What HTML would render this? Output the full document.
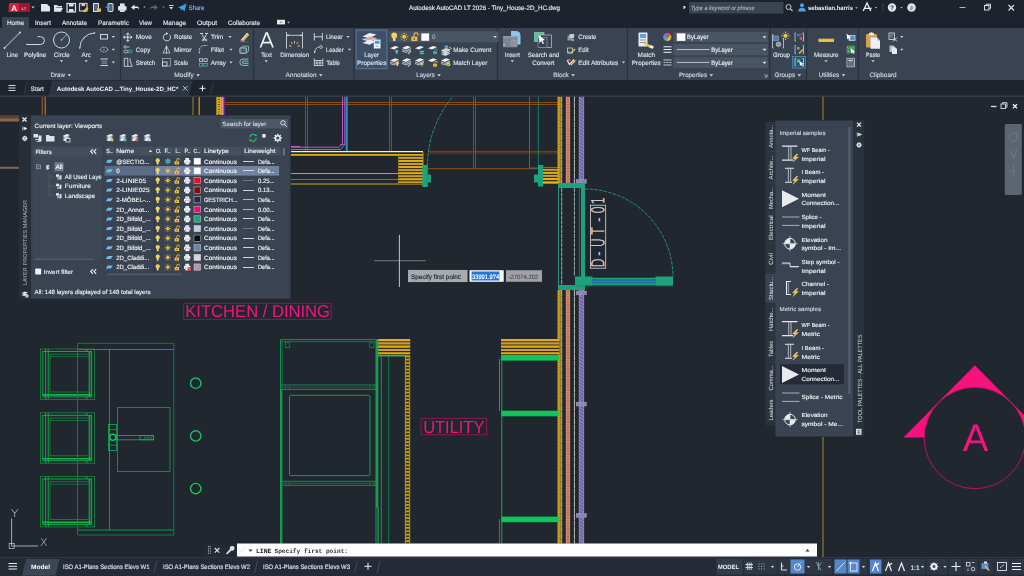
<!DOCTYPE html>
<html lang="en"><head><meta charset="utf-8"><title>Autodesk AutoCAD LT 2026 - Tiny_House-2D_HC.dwg</title>
<style>
html,body{margin:0;padding:0;background:#212830;overflow:hidden}
body{width:1024px;height:576px;position:relative;font-family:"Liberation Sans",sans-serif}
svg{position:absolute;left:0;top:0;display:block;opacity:0.999;text-rendering:geometricPrecision}
svg text{font-family:"Liberation Sans",sans-serif;white-space:pre}
</style></head><body>
<svg width="1024" height="576" viewBox="0 0 1024 576">
<g id="canvas">
<rect x="0" y="96" width="1024" height="461" fill="#212830" />
<line x1="225" y1="102.5" x2="557.8" y2="102.5" stroke="#8f5216" stroke-width="0.9" />
<line x1="225" y1="104.5" x2="557.8" y2="104.5" stroke="#8f5216" stroke-width="0.9" />
<line x1="305.5" y1="96.5" x2="305.5" y2="151" stroke="#8f5216" stroke-width="0.9" />
<line x1="307.5" y1="96.5" x2="307.5" y2="151" stroke="#8f5216" stroke-width="0.9" />
<line x1="389.5" y1="96.5" x2="389.5" y2="151" stroke="#8f5216" stroke-width="0.9" />
<line x1="391.5" y1="96.5" x2="391.5" y2="151" stroke="#8f5216" stroke-width="0.9" />
<line x1="473.5" y1="96.5" x2="473.5" y2="169" stroke="#8f5216" stroke-width="0.9" />
<line x1="475.5" y1="96.5" x2="475.5" y2="169" stroke="#8f5216" stroke-width="0.9" />
<line x1="428" y1="151.45" x2="558" y2="151.45" stroke="#80491a" stroke-width="0.9" />
<line x1="428" y1="152.95" x2="558" y2="152.95" stroke="#80491a" stroke-width="0.9" />
<line x1="428" y1="168.6" x2="538" y2="168.6" stroke="#7a4a1e" stroke-width="1.2" />
<line x1="42.3" y1="96.5" x2="42.3" y2="115" stroke="#8a5a34" stroke-width="1.2" />
<line x1="45.2" y1="96.5" x2="45.2" y2="115" stroke="#c27a1e" stroke-width="1.2" />
<line x1="193" y1="96.5" x2="193" y2="115" stroke="#9a8a28" stroke-width="1" />
<line x1="199.2" y1="96.5" x2="199.2" y2="115" stroke="#d89a18" stroke-width="1.2" />
<rect x="216.8" y="96.5" width="4.2" height="18.5" fill="#e2b010" />
<line x1="219" y1="96.5" x2="219" y2="115" stroke="#6a5208" stroke-width="2.4" stroke-dasharray="1 1.500"/>
<line x1="216.8" y1="96.5" x2="216.8" y2="115" stroke="#e2b010" stroke-width="0.8" />
<line x1="221" y1="96.5" x2="221" y2="115" stroke="#e2b010" stroke-width="0.8" />
<rect x="221.3" y="96.5" width="2.3" height="18.5" fill="#e88cc0" />
<line x1="224.6" y1="96.5" x2="224.6" y2="115" stroke="#5a2a80" stroke-width="1.2" />
<rect x="0" y="115.3" width="19" height="3" fill="#5c4234" />
<rect x="0" y="118.3" width="19" height="3.3" fill="#86664f" />
<line x1="0" y1="167.8" x2="19" y2="167.8" stroke="#8a6450" stroke-width="2" />
<path d="M342.500 96.500V143.500l-3 3.700H291" stroke="#c565d8" fill="none" stroke-width="0.9" />
<path d="M344.800 96.500V144.500l-4 5H291" stroke="#c565d8" fill="none" stroke-width="0.9" />
<path d="M340 144.500h4.800" stroke="#c565d8" fill="none" stroke-width="0.7" />
<line x1="346.7" y1="96" x2="346.7" y2="151" stroke="#2c90c8" stroke-width="2" />
<line x1="291" y1="151.7" x2="423" y2="151.7" stroke="#f2f0ea" stroke-width="1.3" />
<line x1="291" y1="154.9" x2="423" y2="154.9" stroke="#e2b010" stroke-width="1.8" />
<line x1="291" y1="173.5" x2="398.5" y2="173.5" stroke="#e2b010" stroke-width="0.9" />
<line x1="291" y1="179.5" x2="398.5" y2="179.5" stroke="#9a7a1c" stroke-width="0.9" />
<line x1="291" y1="184" x2="423" y2="184" stroke="#9a7a1c" stroke-width="1.3" />
<line x1="291" y1="146.5" x2="300" y2="146.5" stroke="#c565d8" stroke-width="0.9" />
<line x1="398.5" y1="156" x2="398.5" y2="184" stroke="#e2b010" stroke-width="0.8" />
<rect x="398.5" y="156" width="24.5" height="28" fill="#3a2e0c" />
<line x1="398.5" y1="157.9" x2="423" y2="157.9" stroke="#bf9e4e" stroke-width="2" />
<line x1="398.5" y1="160.95000000000002" x2="423" y2="160.95000000000002" stroke="#e2b010" stroke-width="2" />
<line x1="398.5" y1="164.0" x2="423" y2="164.0" stroke="#bf9e4e" stroke-width="2" />
<line x1="398.5" y1="167.05" x2="423" y2="167.05" stroke="#e2b010" stroke-width="2" />
<line x1="398.5" y1="170.1" x2="423" y2="170.1" stroke="#bf9e4e" stroke-width="2" />
<line x1="398.5" y1="173.15" x2="423" y2="173.15" stroke="#e2b010" stroke-width="2" />
<line x1="398.5" y1="176.2" x2="423" y2="176.2" stroke="#bf9e4e" stroke-width="2" />
<line x1="398.5" y1="179.25" x2="423" y2="179.25" stroke="#e2b010" stroke-width="2" />
<line x1="398.5" y1="182.3" x2="423" y2="182.3" stroke="#bf9e4e" stroke-width="2" />
<line x1="423" y1="152" x2="423" y2="185" stroke="#e2b010" stroke-width="0.8" />
<rect x="422.3" y="165" width="5.5" height="22" fill="#1fa37c" />
<rect x="427.5" y="174.5" width="3.5" height="8" fill="#1fa37c" />
<path d="M427.500 166A106.500 106.500 0 0 1 453.500 96" stroke="#1fa37c" fill="none" stroke-width="0.9" stroke-dasharray="3.500 1.200"/>
<line x1="529.5" y1="96" x2="529.5" y2="168" stroke="#1b8a72" stroke-width="0.9" />
<line x1="538.3" y1="96" x2="538.3" y2="166" stroke="#1b8a72" stroke-width="0.9" />
<line x1="529.5" y1="168" x2="538" y2="168" stroke="#1b8a72" stroke-width="0.9" />
<rect x="538" y="165" width="5.3" height="21.5" fill="#1fa37c" />
<rect x="534" y="174.5" width="4.5" height="8" fill="#1fa37c" />
<rect x="543" y="166.5" width="15" height="18" fill="#3a2e0c" />
<line x1="543" y1="167.6" x2="558.5" y2="167.6" stroke="#8a6a20" stroke-width="1.2" />
<line x1="543" y1="169.9" x2="558.5" y2="169.9" stroke="#bf9e4e" stroke-width="1.8" />
<line x1="543" y1="172.9" x2="558.5" y2="172.9" stroke="#e2b010" stroke-width="2" />
<line x1="543" y1="175.9" x2="558.5" y2="175.9" stroke="#bf9e4e" stroke-width="2" />
<line x1="543" y1="179" x2="558.5" y2="179" stroke="#e2b010" stroke-width="2" />
<line x1="543" y1="182.5" x2="558.5" y2="182.5" stroke="#e2b010" stroke-width="2.4" />
<rect x="557.8" y="96" width="2.6" height="87" fill="#caa21c" />
<line x1="559.1" y1="96" x2="559.1" y2="183" stroke="#6e5810" stroke-width="1.1" stroke-dasharray="1 1.400"/>
<line x1="558" y1="96" x2="558" y2="183" stroke="#e6b81c" stroke-width="0.6" />
<line x1="560.2" y1="96" x2="560.2" y2="183" stroke="#e6b81c" stroke-width="0.6" />
<line x1="561.7" y1="96" x2="561.7" y2="183" stroke="#ccd6d0" stroke-width="0.9" stroke-dasharray="6 0.400"/>
<rect x="565.8" y="96" width="4.3" height="87" fill="#d48c6c" />
<line x1="567.95" y1="96" x2="567.95" y2="183" stroke="#a86448" stroke-width="2.4" stroke-dasharray="0.700 1.300"/>
<line x1="574.4" y1="96" x2="574.4" y2="183" stroke="#ccd6d0" stroke-width="0.9" stroke-dasharray="6 0.400"/>
<rect x="579" y="96" width="4.9" height="87" fill="#8c7ebc" />
<path d="M579.300 96.0l4.300 3.200M579.300 99.3l4.300 3.200M579.300 102.6l4.300 3.200M579.300 105.9l4.300 3.200M579.300 109.2l4.300 3.200M579.300 112.5l4.300 3.200M579.300 115.8l4.300 3.200M579.300 119.1l4.300 3.200M579.300 122.4l4.300 3.200M579.300 125.7l4.300 3.200M579.300 129.0l4.300 3.200M579.300 132.3l4.300 3.200M579.300 135.6l4.300 3.200M579.300 138.9l4.300 3.200M579.300 142.2l4.300 3.200M579.300 145.5l4.300 3.200M579.300 148.8l4.300 3.200M579.300 152.1l4.300 3.200M579.300 155.4l4.300 3.200M579.300 158.7l4.300 3.200M579.300 162.0l4.300 3.200M579.300 165.3l4.300 3.200M579.300 168.6l4.300 3.200M579.300 171.9l4.300 3.200M579.300 175.2l4.300 3.200M579.300 178.5l4.300 3.200" stroke="#5c5092" fill="none" stroke-width="1" />
<line x1="579.2" y1="96" x2="579.2" y2="183" stroke="#9e90cc" stroke-width="0.6" />
<line x1="583.7" y1="96" x2="583.7" y2="183" stroke="#9e90cc" stroke-width="0.6" />
<rect x="557.8" y="290" width="2.6" height="253.5" fill="#caa21c" />
<line x1="559.1" y1="290" x2="559.1" y2="543.5" stroke="#6e5810" stroke-width="1.1" stroke-dasharray="1 1.400"/>
<line x1="558" y1="290" x2="558" y2="543.5" stroke="#e6b81c" stroke-width="0.6" />
<line x1="560.2" y1="290" x2="560.2" y2="543.5" stroke="#e6b81c" stroke-width="0.6" />
<line x1="561.7" y1="290" x2="561.7" y2="543.5" stroke="#ccd6d0" stroke-width="0.9" stroke-dasharray="6 0.400"/>
<rect x="565.8" y="290" width="4.3" height="253.5" fill="#d48c6c" />
<line x1="567.95" y1="290" x2="567.95" y2="543.5" stroke="#a86448" stroke-width="2.4" stroke-dasharray="0.700 1.300"/>
<line x1="574.4" y1="290" x2="574.4" y2="543.5" stroke="#ccd6d0" stroke-width="0.9" stroke-dasharray="6 0.400"/>
<rect x="579" y="290" width="4.9" height="253.5" fill="#8c7ebc" />
<path d="M579.300 290.0l4.300 3.200M579.300 293.3l4.300 3.200M579.300 296.6l4.300 3.200M579.300 299.9l4.300 3.200M579.300 303.2l4.300 3.200M579.300 306.5l4.300 3.200M579.300 309.8l4.300 3.200M579.300 313.1l4.300 3.200M579.300 316.4l4.300 3.200M579.300 319.7l4.300 3.200M579.300 323.0l4.300 3.200M579.300 326.3l4.300 3.200M579.300 329.6l4.300 3.200M579.300 332.9l4.300 3.200M579.300 336.2l4.300 3.200M579.300 339.5l4.300 3.200M579.300 342.8l4.300 3.200M579.300 346.1l4.300 3.200M579.300 349.4l4.300 3.200M579.300 352.7l4.300 3.200M579.300 356.0l4.300 3.200M579.300 359.3l4.300 3.200M579.300 362.6l4.300 3.200M579.300 365.9l4.300 3.200M579.300 369.2l4.300 3.200M579.300 372.5l4.300 3.200M579.300 375.8l4.300 3.200M579.300 379.1l4.300 3.200M579.300 382.4l4.300 3.200M579.300 385.7l4.300 3.200M579.300 389.0l4.300 3.200M579.300 392.3l4.300 3.200M579.300 395.6l4.300 3.200M579.300 398.9l4.300 3.200M579.300 402.2l4.300 3.200M579.300 405.5l4.300 3.200M579.300 408.8l4.300 3.200M579.300 412.1l4.300 3.200M579.300 415.4l4.300 3.200M579.300 418.7l4.300 3.200M579.300 422.0l4.300 3.200M579.300 425.3l4.300 3.200M579.300 428.6l4.300 3.200M579.300 431.9l4.300 3.200M579.300 435.2l4.300 3.200M579.300 438.5l4.300 3.200M579.300 441.8l4.300 3.200M579.300 445.1l4.300 3.200M579.300 448.4l4.300 3.200M579.300 451.7l4.300 3.200M579.300 455.0l4.300 3.200M579.300 458.3l4.300 3.200M579.300 461.6l4.300 3.200M579.300 464.9l4.300 3.200M579.300 468.2l4.300 3.200M579.300 471.5l4.300 3.200M579.300 474.8l4.300 3.200M579.300 478.1l4.300 3.200M579.300 481.4l4.300 3.200M579.300 484.7l4.300 3.200M579.300 488.0l4.300 3.200M579.300 491.3l4.300 3.200M579.300 494.6l4.300 3.200M579.300 497.9l4.300 3.200M579.300 501.2l4.300 3.200M579.300 504.5l4.300 3.200M579.300 507.8l4.300 3.200M579.300 511.1l4.300 3.200M579.300 514.4l4.300 3.200M579.300 517.7l4.300 3.200M579.300 521.0l4.300 3.200M579.300 524.3l4.300 3.200M579.300 527.6l4.300 3.200M579.300 530.9l4.300 3.200M579.300 534.2l4.300 3.200M579.300 537.5l4.300 3.200M579.300 540.8l4.300 3.200" stroke="#5c5092" fill="none" stroke-width="1" />
<line x1="579.2" y1="290" x2="579.2" y2="543.5" stroke="#9e90cc" stroke-width="0.6" />
<line x1="583.7" y1="290" x2="583.7" y2="543.5" stroke="#9e90cc" stroke-width="0.6" />
<rect x="576.200" y="179.6" width="4.600" height="3.800" fill="#8a84b4" stroke="#a8a0cc" stroke-width="0.500"/><rect x="581.800" y="179.6" width="4.600" height="3.800" fill="#8a84b4" stroke="#a8a0cc" stroke-width="0.500"/>
<rect x="576.200" y="291" width="4.600" height="3.800" fill="#8a84b4" stroke="#a8a0cc" stroke-width="0.500"/><rect x="581.800" y="291" width="4.600" height="3.800" fill="#8a84b4" stroke="#a8a0cc" stroke-width="0.500"/>
<rect x="576.200" y="402.2" width="4.600" height="3.800" fill="#8a84b4" stroke="#a8a0cc" stroke-width="0.500"/><rect x="581.800" y="402.2" width="4.600" height="3.800" fill="#8a84b4" stroke="#a8a0cc" stroke-width="0.500"/>
<rect x="576.200" y="513.5" width="4.600" height="3.800" fill="#8a84b4" stroke="#a8a0cc" stroke-width="0.500"/><rect x="581.800" y="513.5" width="4.600" height="3.800" fill="#8a84b4" stroke="#a8a0cc" stroke-width="0.500"/>
<rect x="558" y="183" width="27" height="5" fill="#1fa37c" />
<rect x="581" y="188" width="4" height="90" fill="#1fa37c" />
<line x1="558.5" y1="188" x2="558.5" y2="285" stroke="#34c49c" stroke-width="0.7" />
<line x1="561.7" y1="188" x2="561.7" y2="285" stroke="#c2cec8" stroke-width="0.8" stroke-dasharray="4 0.600"/>
<line x1="574.4" y1="188" x2="574.4" y2="276" stroke="#c2cec8" stroke-width="0.8" stroke-dasharray="4 0.600"/>
<line x1="579.3" y1="188" x2="579.3" y2="276" stroke="#1b8a72" stroke-width="0.8" />
<rect x="558" y="285" width="27" height="5" fill="#1fa37c" />
<rect x="575" y="276.5" width="17.5" height="9" fill="#1fa37c" />
<rect x="655.5" y="276.5" width="17.5" height="9" fill="#1fa37c" />
<rect x="592" y="277.8" width="64" height="7.2" fill="#1fa37c" />
<rect x="592" y="279.2" width="64" height="4.2" fill="#1c6fa0" />
<line x1="592" y1="281.3" x2="656" y2="281.3" stroke="#3a9ad0" stroke-width="0.7" />
<line x1="575" y1="285.8" x2="673" y2="285.8" stroke="#1b8a72" stroke-width="0.7" />
<path d="M585 189A88 88 0 0 1 673 277" stroke="#1fa37c" fill="none" stroke-width="0.9" stroke-dasharray="3.500 1.200"/>
<rect x="590.400" y="205.200" width="15.300" height="63" fill="none" stroke="#d8dadc" stroke-width="0.800"/>
<text transform="translate(604,267.600) rotate(-90) scale(0.68,1)" x="0 17.500 30.300 48.700 67.400 79.700 93" y="0" font-size="17.200" fill="#d0d3d6" stroke="#d0d3d6" stroke-width="0.550" style="font-family:&quot;DejaVu Sans Light&quot;,&quot;DejaVu Sans&quot;,sans-serif;font-weight:200">D-UT-01</text>
<rect x="378" y="339" width="32.2" height="15.5" fill="#3a2e0c" />
<line x1="378" y1="340.1" x2="410.2" y2="340.1" stroke="#e2b010" stroke-width="2.1" />
<line x1="378" y1="343.38" x2="410.2" y2="343.38" stroke="#bf9e4e" stroke-width="2.1" />
<line x1="378" y1="346.66" x2="410.2" y2="346.66" stroke="#e2b010" stroke-width="2.1" />
<line x1="378" y1="349.94" x2="410.2" y2="349.94" stroke="#bf9e4e" stroke-width="2.1" />
<line x1="378" y1="353.22" x2="410.2" y2="353.22" stroke="#e2b010" stroke-width="2.1" />
<line x1="378" y1="355.6" x2="410.2" y2="355.6" stroke="#c8c040" stroke-width="0.8" />
<rect x="405" y="355.5" width="5" height="188" fill="#3a3010" />
<line x1="405.4" y1="355.5" x2="405.4" y2="543.5" stroke="#d0a818" stroke-width="0.9" />
<line x1="409.7" y1="355.5" x2="409.7" y2="543.5" stroke="#d0a818" stroke-width="0.9" />
<line x1="407.5" y1="355.5" x2="407.5" y2="543.5" stroke="#c4a020" stroke-width="3.6" stroke-dasharray="1.700 1.600"/>
<rect x="501" y="339" width="58.5" height="15.5" fill="#3a2e0c" />
<line x1="501" y1="340.1" x2="559.5" y2="340.1" stroke="#e2b010" stroke-width="2.1" />
<line x1="501" y1="343.38" x2="559.5" y2="343.38" stroke="#bf9e4e" stroke-width="2.1" />
<line x1="501" y1="346.66" x2="559.5" y2="346.66" stroke="#e2b010" stroke-width="2.1" />
<line x1="501" y1="349.94" x2="559.5" y2="349.94" stroke="#bf9e4e" stroke-width="2.1" />
<line x1="501" y1="353.22" x2="559.5" y2="353.22" stroke="#e2b010" stroke-width="2.1" />
<rect x="501" y="355" width="57.8" height="5.6" fill="#10c65a" />
<rect x="501" y="410.7" width="57.8" height="5.6" fill="#10c65a" />
<rect x="501" y="516.6" width="57.8" height="5.6" fill="#10c65a" />
<line x1="499.5" y1="359" x2="499.5" y2="411" stroke="#16b052" stroke-width="0.9" />
<line x1="501.8" y1="360" x2="501.8" y2="543.5" stroke="#16a850" stroke-width="1" />
<line x1="499.5" y1="519" x2="499.5" y2="543.5" stroke="#14a04c" stroke-width="0.9" />
<rect x="280.600" y="339.700" width="96.400" height="210" fill="none" stroke="#18a45c" stroke-width="0.9"/>
<line x1="280.6" y1="341.7" x2="376" y2="341.7" stroke="#128a4c" stroke-width="0.8" />
<line x1="282.3" y1="341.7" x2="282.3" y2="543.5" stroke="#128a4c" stroke-width="0.6" />
<line x1="281" y1="390" x2="281" y2="543.5" stroke="#18a45c" stroke-width="1.6" />
<line x1="377.2" y1="339.7" x2="377.2" y2="507.5" stroke="#18a45c" stroke-width="2.2" />
<line x1="378.3" y1="507" x2="378.3" y2="543.5" stroke="#18a45c" stroke-width="0.9" />
<line x1="375.6" y1="341.7" x2="375.6" y2="543.5" stroke="#128a4c" stroke-width="0.7" />
<line x1="381.3" y1="356.2" x2="381.3" y2="543.5" stroke="#18a45c" stroke-width="0.9" />
<line x1="388.7" y1="356.2" x2="388.7" y2="543.5" stroke="#128a4c" stroke-width="0.9" />
<line x1="378" y1="356.2" x2="405" y2="356.2" stroke="#18a45c" stroke-width="0.8" />
<rect x="285.300" y="342.700" width="4.400" height="4.800" fill="none" stroke="#128a4c" stroke-width="0.800"/><rect x="369.600" y="342.700" width="4.400" height="4.800" fill="none" stroke="#128a4c" stroke-width="0.800"/>
<line x1="280.6" y1="385" x2="377" y2="385" stroke="#18a45c" stroke-width="0.8" />
<line x1="280.6" y1="387.3" x2="377" y2="387.3" stroke="#128a4c" stroke-width="0.6" />
<line x1="280.6" y1="389.4" x2="377" y2="389.4" stroke="#18a45c" stroke-width="0.8" />
<line x1="285.6" y1="385" x2="285.6" y2="389.4" stroke="#128a4c" stroke-width="0.6" />
<line x1="289.5" y1="385" x2="289.5" y2="389.4" stroke="#128a4c" stroke-width="0.6" />
<line x1="370" y1="385" x2="370" y2="389.4" stroke="#128a4c" stroke-width="0.6" />
<line x1="374" y1="385" x2="374" y2="389.4" stroke="#128a4c" stroke-width="0.6" />
<rect x="289.500" y="395.300" width="80.500" height="80.300" rx="1.200" fill="none" stroke="#18a45c" stroke-width="0.9"/>
<line x1="280.6" y1="481.3" x2="377" y2="481.3" stroke="#18a45c" stroke-width="0.8" />
<line x1="280.6" y1="483.3" x2="377" y2="483.3" stroke="#128a4c" stroke-width="0.6" />
<line x1="280.6" y1="485.3" x2="377" y2="485.3" stroke="#18a45c" stroke-width="0.8" />
<line x1="285.6" y1="481.3" x2="285.6" y2="485.3" stroke="#128a4c" stroke-width="0.6" />
<line x1="289.5" y1="481.3" x2="289.5" y2="485.3" stroke="#128a4c" stroke-width="0.6" />
<line x1="370" y1="481.3" x2="370" y2="485.3" stroke="#128a4c" stroke-width="0.6" />
<line x1="374" y1="481.3" x2="374" y2="485.3" stroke="#128a4c" stroke-width="0.6" />
<rect x="183.700" y="303.300" width="147.300" height="16" fill="none" stroke="#a81458" stroke-width="0.800"/>
<text x="185.3" y="317.2" font-size="17.2" fill="#f4147e" stroke="#f4147e" stroke-width="0" text-anchor="start" font-weight="normal" textLength="144.7" lengthAdjust="spacingAndGlyphs" >KITCHEN / DINING</text>
<rect x="421" y="418.300" width="65.700" height="16.500" fill="none" stroke="#a81458" stroke-width="0.800"/>
<text x="423.2" y="432.7" font-size="17.4" fill="#f4147e" stroke="#f4147e" stroke-width="0" text-anchor="start" font-weight="normal" textLength="61.2" lengthAdjust="spacingAndGlyphs" >UTILITY</text>
<rect x="40.5" y="349" width="54.1" height="50.4" fill="none" stroke="#0f8c40" stroke-width="0.800"/>
<rect x="42.8" y="351.5" width="48.800000000000004" height="45.4" fill="none" stroke="#12b64a" stroke-width="0.900"/>
<line x1="45.6" y1="349" x2="45.6" y2="399.4" stroke="#12b64a" stroke-width="0.9" />
<line x1="48.2" y1="349" x2="48.2" y2="399.4" stroke="#12b64a" stroke-width="0.9" />
<line x1="89.5" y1="351.5" x2="89.5" y2="396.9" stroke="#12b64a" stroke-width="1.6" />
<line x1="42.8" y1="394.9" x2="91.6" y2="394.9" stroke="#12b64a" stroke-width="1.6" />
<rect x="50.0" y="354.2" width="39.5" height="37.8" fill="none" stroke="#0f8c40" stroke-width="0.800"/>
<line x1="50.0" y1="356.7" x2="89.5" y2="356.7" stroke="#0f8c40" stroke-width="0.7" />
<line x1="85.5" y1="349" x2="85.5" y2="351.5" stroke="#12b64a" stroke-width="0.6" />
<line x1="87.5" y1="349" x2="87.5" y2="351.5" stroke="#12b64a" stroke-width="0.6" />
<line x1="85.5" y1="396.9" x2="85.5" y2="399.4" stroke="#12b64a" stroke-width="0.6" />
<line x1="87.5" y1="396.9" x2="87.5" y2="399.4" stroke="#12b64a" stroke-width="0.6" />
<rect x="40.5" y="412.8" width="54.1" height="50.4" fill="none" stroke="#0f8c40" stroke-width="0.800"/>
<rect x="42.8" y="415.3" width="48.800000000000004" height="45.4" fill="none" stroke="#12b64a" stroke-width="0.900"/>
<line x1="45.6" y1="412.8" x2="45.6" y2="463.2" stroke="#12b64a" stroke-width="0.9" />
<line x1="48.2" y1="412.8" x2="48.2" y2="463.2" stroke="#12b64a" stroke-width="0.9" />
<line x1="89.5" y1="415.3" x2="89.5" y2="460.7" stroke="#12b64a" stroke-width="1.6" />
<line x1="42.8" y1="458.7" x2="91.6" y2="458.7" stroke="#12b64a" stroke-width="1.6" />
<rect x="50.0" y="418.0" width="39.5" height="37.8" fill="none" stroke="#0f8c40" stroke-width="0.800"/>
<line x1="50.0" y1="420.5" x2="89.5" y2="420.5" stroke="#0f8c40" stroke-width="0.7" />
<line x1="85.5" y1="412.8" x2="85.5" y2="415.3" stroke="#12b64a" stroke-width="0.6" />
<line x1="87.5" y1="412.8" x2="87.5" y2="415.3" stroke="#12b64a" stroke-width="0.6" />
<line x1="85.5" y1="460.7" x2="85.5" y2="463.2" stroke="#12b64a" stroke-width="0.6" />
<line x1="87.5" y1="460.7" x2="87.5" y2="463.2" stroke="#12b64a" stroke-width="0.6" />
<rect x="40.5" y="476.5" width="54.1" height="50.4" fill="none" stroke="#0f8c40" stroke-width="0.800"/>
<rect x="42.8" y="479.0" width="48.800000000000004" height="45.4" fill="none" stroke="#12b64a" stroke-width="0.900"/>
<line x1="45.6" y1="476.5" x2="45.6" y2="526.9" stroke="#12b64a" stroke-width="0.9" />
<line x1="48.2" y1="476.5" x2="48.2" y2="526.9" stroke="#12b64a" stroke-width="0.9" />
<line x1="89.5" y1="479.0" x2="89.5" y2="524.4" stroke="#12b64a" stroke-width="1.6" />
<line x1="42.8" y1="522.4" x2="91.6" y2="522.4" stroke="#12b64a" stroke-width="1.6" />
<rect x="50.0" y="481.7" width="39.5" height="37.8" fill="none" stroke="#0f8c40" stroke-width="0.800"/>
<line x1="50.0" y1="484.2" x2="89.5" y2="484.2" stroke="#0f8c40" stroke-width="0.7" />
<line x1="85.5" y1="476.5" x2="85.5" y2="479.0" stroke="#12b64a" stroke-width="0.6" />
<line x1="87.5" y1="476.5" x2="87.5" y2="479.0" stroke="#12b64a" stroke-width="0.6" />
<line x1="85.5" y1="524.4" x2="85.5" y2="526.9" stroke="#12b64a" stroke-width="0.6" />
<line x1="87.5" y1="524.4" x2="87.5" y2="526.9" stroke="#12b64a" stroke-width="0.6" />
<path d="M77.500 535V343.300H173.800V535z" stroke="#1a7e52" fill="none" stroke-width="0.9" />
<line x1="77.5" y1="349.5" x2="173.8" y2="349.5" stroke="#18a25c" stroke-width="0.9" />
<line x1="77.5" y1="530" x2="173.8" y2="530" stroke="#18a25c" stroke-width="0.9" />
<line x1="109.5" y1="349.5" x2="109.5" y2="530" stroke="#18a25c" stroke-width="0.9" />
<rect x="117.500" y="407.500" width="52.500" height="64" fill="none" stroke="#1a9058" stroke-width="0.9"/>
<rect x="108.500" y="424.500" width="8.200" height="26" fill="none" stroke="#16b455" stroke-width="0.800"/>
<line x1="108.5" y1="429.6" x2="116.7" y2="429.6" stroke="#16b455" stroke-width="0.7" />
<line x1="108.5" y1="445.1" x2="116.7" y2="445.1" stroke="#16b455" stroke-width="0.7" />
<circle cx="112.8" cy="437.3" r="3.1" stroke="#19c45c" fill="none" stroke-width="1.4" />
<rect x="116.700" y="435.400" width="36.800" height="4.400" fill="none" stroke="#16b455" stroke-width="0.800"/><rect x="140" y="435.400" width="13.500" height="4.400" fill="none" stroke="#16b455" stroke-width="0.800"/>
<circle cx="145" cy="437.6" r="0.9" stroke="#16b455" fill="none" stroke-width="0.5" />
<circle cx="148" cy="437.6" r="0.9" stroke="#16b455" fill="none" stroke-width="0.5" />
<circle cx="151" cy="437.6" r="0.9" stroke="#16b455" fill="none" stroke-width="0.5" />
<circle cx="195.7" cy="383.2" r="5.2" stroke="#19c45c" fill="none" stroke-width="1.4" />
<circle cx="195.7" cy="435.9" r="5.2" stroke="#19c45c" fill="none" stroke-width="1.4" />
<circle cx="195.7" cy="488.6" r="5.2" stroke="#19c45c" fill="none" stroke-width="1.4" />
<line x1="11.6" y1="518.5" x2="11.6" y2="546" stroke="#c9cdd3" stroke-width="0.8" />
<line x1="11.6" y1="546" x2="38" y2="546" stroke="#c9cdd3" stroke-width="0.8" />
<rect x="9.200" y="543.500" width="5" height="5" fill="none" stroke="#c9cdd3" stroke-width="0.700"/>
<text x="10.7" y="516.5" font-size="10.8" fill="#c9cdd3" stroke="#c9cdd3" stroke-width="0" text-anchor="start" font-weight="normal" style="font-family:&quot;DejaVu Sans Light&quot;,&quot;DejaVu Sans&quot;,sans-serif" textLength="8" lengthAdjust="spacingAndGlyphs" >Y</text>
<text x="40" y="545.8" font-size="10.8" fill="#c9cdd3" stroke="#c9cdd3" stroke-width="0" text-anchor="start" font-weight="normal" style="font-family:&quot;DejaVu Sans Light&quot;,&quot;DejaVu Sans&quot;,sans-serif" textLength="7.6" lengthAdjust="spacingAndGlyphs" >X</text>
<line x1="374.3" y1="260.7" x2="425.7" y2="260.7" stroke="#737a83" stroke-width="1" />
<line x1="399.4" y1="234.9" x2="399.4" y2="287" stroke="#c2c6cb" stroke-width="1" />
<rect x="408.3" y="270.2" width="58.8" height="11.6" fill="#a8acb1" />
<rect x="408.300" y="270.200" width="58.800" height="11.600" fill="none" stroke="#c8cbcf" stroke-width="0.5"/>
<text x="411" y="278.5" font-size="6.5" fill="#20252c" stroke="#20252c" stroke-width="0.14" text-anchor="start" font-weight="normal" textLength="50.5" lengthAdjust="spacingAndGlyphs" >Specify first point:</text>
<rect x="469.5" y="270.2" width="34.2" height="11.6" fill="#fafbfc" />
<rect x="471.6" y="271.5" width="27.8" height="9" fill="#2878d8" />
<text x="472" y="278.5" font-size="6.3" fill="#ffffff" stroke="#ffffff" stroke-width="0.14" text-anchor="start" font-weight="normal" textLength="27.2" lengthAdjust="spacingAndGlyphs" >33991.974</text>
<rect x="506" y="270.2" width="36" height="11.6" fill="#a0a4a9" />
<text x="508.5" y="278.5" font-size="6.2" fill="#4a5058" stroke="#4a5058" stroke-width="0.14" text-anchor="start" font-weight="normal" textLength="29.7" lengthAdjust="spacingAndGlyphs" >-27074.202</text>
<line x1="823" y1="96" x2="823" y2="120" stroke="#a88a20" stroke-width="1" />
<line x1="823" y1="437" x2="823" y2="557" stroke="#a88a20" stroke-width="1" />
<path d="M974.900 365.300L903.500 437.600H1046.300z" fill="#fa1280"/>
<circle cx="974.9" cy="438" r="50.7" stroke="#c81466" fill="#212830" stroke-width="0.9" />
<text x="975.6" y="451" font-size="38.4" fill="#f8147f" stroke="#f8147f" stroke-width="0" text-anchor="middle" font-weight="normal" stroke="#f8147f" stroke-width="0.500">A</text>
<line x1="991" y1="106.5" x2="996.5" y2="106.5" stroke="#dfe3e8" stroke-width="1.3" />
<rect x="1001" y="104" width="4.500" height="4.500" fill="none" stroke="#dfe3e8" stroke-width="0.9"/><path d="M1002.500 104v-1.300h4.500v4.500h-1.300" fill="none" stroke="#dfe3e8" stroke-width="0.9"/>
<path d="M1013 104.300l4 4m0-4l-4 4" stroke="#eef1f4" stroke-width="1.300"/>
<rect x="1004.800" y="124" width="17" height="71" rx="1.500" fill="#5e6671"/>
<circle cx="1013.300" cy="137" r="4" fill="none" stroke="#6f7782" stroke-width="1.200"/><path d="M1010 150l3.500 8 3.500-8M1013.500 165v12M1009.500 171h8" stroke="#6f7782" stroke-width="1.100" fill="none"/>
</g>
<g id="titlebar">
<rect x="0" y="0" width="1024" height="28" fill="#1e242e" />
<path d="M9 3h20a1 1 0 0 1 1 1v7a1 1 0 0 1-1 1H8.5z" fill="#d81f3f"/>
<path d="M19 3h10a1 1 0 0 1 1 1v7a1 1 0 0 1-1 1H19z" fill="#a3152f"/>
<text x="11.2" y="10.6" font-size="8" fill="#fff" stroke="#fff" stroke-width="0" text-anchor="start" font-weight="bold" >A</text>
<text x="21.5" y="9.8" font-size="4.2" fill="#e9b8c0" stroke="#e9b8c0" stroke-width="0" text-anchor="start" font-weight="bold" >LT</text>
<path d="M31.4 6.5h3.2l-1.6 2z" fill="#cfd5dd"/>
<path d="M41 4h6l3 3v4.5h-9z" fill="#e3e7ec"/>
<path d="M54 5h3l1 1h4v1.5h-6l-2 4z M55.5 8h7.5l-2 3.7h-7z" fill="#e3e7ec"/>
<rect x="67" y="3.5" width="8.5" height="8.5" fill="none" stroke="#dfe3e8" stroke-width="1.2"/><rect x="69" y="3.5" width="4.5" height="3" fill="#dfe3e8"/><rect x="69" y="9" width="4.5" height="3" fill="#dfe3e8"/>
<rect x="79.5" y="3.5" width="7.5" height="7.5" fill="none" stroke="#c9ced6" stroke-width="1.2"/><rect x="81.5" y="3.5" width="3.5" height="2.6" fill="#c9ced6"/><path d="M83 11l4-4 1.5 1.5-4 4z" fill="#e8c24a"/>
<rect x="93.5" y="3.5" width="5" height="8" fill="#5e6876" stroke="#dfe3e8" stroke-width="1"/><rect x="97" y="8.5" width="4" height="3.2" fill="#e8c24a"/>
<rect x="108" y="3.5" width="5" height="8" rx="0.8" fill="#59626f" stroke="#dfe3e8" stroke-width="1"/><path d="M105.5 7.3h4m-1.5-1.5l1.6 1.5-1.6 1.5" stroke="#3aa0e8" stroke-width="1" fill="none"/>
<rect x="118" y="6" width="8.5" height="4.6" rx="1" fill="#e3e7ec"/><rect x="120" y="3.4" width="4.6" height="2.8" fill="#e3e7ec"/><rect x="120" y="9" width="4.6" height="3" fill="#bfe6e0"/>
<path d="M131 7.5l3.5-3v2h2.5a2.2 2.2 0 0 1 2 2.8c-.5-1-1.3-1.3-2.2-1.3H134.500v2z" fill="#e8ebef"/>
<path d="M143.3 6.4h2.4l-1.2 1.6z" fill="#aeb5bf"/>
<path d="M158 7.500l-3.500-3v2h-2.500a2.200 2.200 0 0 0-2 2.800c.5-1 1.300-1.300 2.200-1.300H154.500v2z" fill="#5d6673"/>
<path d="M162.3 6.4h2.4l-1.2 1.6z" fill="#7c8592"/>
<rect x="169" y="5" width="4.500" height="1" fill="#d5dae1"/>
<path d="M169.2 6.999999999999999h4l-2.0 2.4z" fill="#d5dae1"/>
<path d="M178 7.500l8.500-4-2 8-2.500-2.500-1.200 1.800-.3-2.500z" fill="#3aa0e8"/>
<text x="188.8" y="9.8" font-size="6.6" fill="#7dbdee" stroke="#7dbdee" stroke-width="0.14" text-anchor="start" font-weight="normal" textLength="15.5" lengthAdjust="spacingAndGlyphs" >Share</text>
<text x="409" y="9.5" font-size="6.4" fill="#e8ebef" stroke="#e8ebef" stroke-width="0.14" text-anchor="start" font-weight="normal" textLength="151" lengthAdjust="spacingAndGlyphs" >Autodesk AutoCAD LT 2026 - Tiny_House-2D_HC.dwg</text>
<path d="M683.5 6.0h2l-1.0 3z" fill="#e0e4ea"/>
<path d="M683.500 5.800l2.200 1.700-2.200 1.700z" fill="#e0e4ea"/>
<rect x="689" y="2" width="94.5" height="11.5" fill="#3a4452" />
<text x="691" y="9.7" font-size="6" fill="#aab2be" stroke="#aab2be" stroke-width="0.14" text-anchor="start" font-weight="normal" textLength="63.5" lengthAdjust="spacingAndGlyphs" font-style="italic">Type a keyword or phrase</text>
<circle cx="788.5" cy="7" r="2.5" stroke="#c4cad3" fill="none" stroke-width="1" />
<line x1="790.3" y1="8.8" x2="792.5" y2="11" stroke="#c4cad3" stroke-width="1.1" />
<circle cx="802" cy="5.2" r="2" stroke="none" fill="#4aa3e6" stroke-width="1" />
<path d="M798.200 11.500a3.800 3.800 0 0 1 7.600 0z" fill="#4aa3e6"/>
<text x="808" y="9.6" font-size="6.2" fill="#eef1f4" stroke="#eef1f4" stroke-width="0" text-anchor="start" font-weight="bold" textLength="45" lengthAdjust="spacingAndGlyphs" >sebastian.harris</text>
<path d="M855.3 7.2h2.4l-1.2 1.6z" fill="#c4cad3"/>
<path d="M863.200 11l3.800-8 3.800 8M864.600 8.300h7" stroke="#eef1f4" stroke-width="1.300" fill="none"/>
<path d="M874.8 7.0h2.4l-1.2 1.6z" fill="#c4cad3"/>
<line x1="883" y1="3.5" x2="883" y2="11.5" stroke="#39414d" stroke-width="1" />
<circle cx="892" cy="7.5" r="4.2" stroke="none" fill="#e3e7ec" stroke-width="1" />
<text x="892" y="10" font-size="6.5" fill="#1e242e" stroke="#1e242e" stroke-width="0" text-anchor="middle" font-weight="bold" >?</text>
<path d="M900.3 7.0h2.4l-1.2 1.6z" fill="#c4cad3"/>
<circle cx="911.5" cy="7.5" r="4.3" stroke="none" fill="#dfe3e8" stroke-width="1" />
<path d="M909.500 9.500l1.500-4 2.500 1.500-1.500 3.500z" fill="#9aa3af"/>
<line x1="959.5" y1="7.5" x2="965.5" y2="7.5" stroke="#aeb5bf" stroke-width="1" />
<rect x="984.500" y="5.500" width="4.500" height="4.500" fill="none" stroke="#d5dae1" stroke-width="1"/><path d="M986 5.500v-1.300h4.500v4.500h-1.300" fill="none" stroke="#d5dae1" stroke-width="1"/>
<path d="M1008.500 5l5.500 5.500m0-5.500l-5.500 5.500" stroke="#e3e7ec" stroke-width="1.100"/>
<rect x="2" y="17" width="27" height="11" fill="#3a4452" />
<text x="7" y="24.8" font-size="6.5" fill="#e6e9ee" stroke="#e6e9ee" stroke-width="0.14" text-anchor="start" font-weight="normal" textLength="17" lengthAdjust="spacingAndGlyphs" >Home</text>
<text x="35" y="24.8" font-size="6.5" fill="#e6e9ee" stroke="#e6e9ee" stroke-width="0.14" text-anchor="start" font-weight="normal" textLength="16" lengthAdjust="spacingAndGlyphs" >Insert</text>
<text x="62" y="24.8" font-size="6.5" fill="#e6e9ee" stroke="#e6e9ee" stroke-width="0.14" text-anchor="start" font-weight="normal" textLength="25" lengthAdjust="spacingAndGlyphs" >Annotate</text>
<text x="98" y="24.8" font-size="6.5" fill="#e6e9ee" stroke="#e6e9ee" stroke-width="0.14" text-anchor="start" font-weight="normal" textLength="31" lengthAdjust="spacingAndGlyphs" >Parametric</text>
<text x="139" y="24.8" font-size="6.5" fill="#e6e9ee" stroke="#e6e9ee" stroke-width="0.14" text-anchor="start" font-weight="normal" textLength="13" lengthAdjust="spacingAndGlyphs" >View</text>
<text x="163" y="24.8" font-size="6.5" fill="#e6e9ee" stroke="#e6e9ee" stroke-width="0.14" text-anchor="start" font-weight="normal" textLength="23" lengthAdjust="spacingAndGlyphs" >Manage</text>
<text x="197" y="24.8" font-size="6.5" fill="#e6e9ee" stroke="#e6e9ee" stroke-width="0.14" text-anchor="start" font-weight="normal" textLength="20" lengthAdjust="spacingAndGlyphs" >Output</text>
<text x="228" y="24.8" font-size="6.5" fill="#e6e9ee" stroke="#e6e9ee" stroke-width="0.14" text-anchor="start" font-weight="normal" textLength="32" lengthAdjust="spacingAndGlyphs" >Collaborate</text>
<rect x="277" y="19.8" width="8" height="4.6" fill="#e6e9ee" />
<rect x="280" y="21.8" width="2" height="0.8" fill="#555e6b" />
<path d="M287.3 21.8h2.4l-1.2 1.6z" fill="#c4cad3"/>
</g>
<g id="ribbon">
<rect x="0" y="28" width="1024" height="52" fill="#3a4452" />
<line x1="120.5" y1="28" x2="120.5" y2="80" stroke="#2a323d" stroke-width="1.2" />
<line x1="253.5" y1="28" x2="253.5" y2="80" stroke="#2a323d" stroke-width="1.2" />
<line x1="354" y1="28" x2="354" y2="80" stroke="#2a323d" stroke-width="1.2" />
<line x1="497.5" y1="28" x2="497.5" y2="80" stroke="#2a323d" stroke-width="1.2" />
<line x1="627.5" y1="28" x2="627.5" y2="80" stroke="#2a323d" stroke-width="1.2" />
<line x1="769.8" y1="28" x2="769.8" y2="80" stroke="#2a323d" stroke-width="1.2" />
<line x1="806.5" y1="28" x2="806.5" y2="80" stroke="#2a323d" stroke-width="1.2" />
<line x1="858.5" y1="28" x2="858.5" y2="80" stroke="#2a323d" stroke-width="1.2" />
<line x1="4.5" y1="48" x2="20" y2="32.5" stroke="#e1e5ea" stroke-width="0.9" />
<circle cx="4.5" cy="48" r="0.9" stroke="none" fill="#e1e5ea" stroke-width="1" />
<circle cx="20" cy="32.5" r="0.9" stroke="none" fill="#e1e5ea" stroke-width="1" />
<text x="12.3" y="57.2" font-size="6.3" fill="#dfe3e9" stroke="#dfe3e9" stroke-width="0.14" text-anchor="middle" font-weight="normal" textLength="11.5" lengthAdjust="spacingAndGlyphs" >Line</text>
<path d="M27 44.500H40.500a3.800 3.800 0 0 0 0-7.800H37.500" stroke="#e1e5ea" fill="none" stroke-width="0.9" />
<circle cx="27" cy="44.5" r="0.8" stroke="none" fill="#e1e5ea" stroke-width="1" />
<text x="35.2" y="57.2" font-size="6.3" fill="#dfe3e9" stroke="#dfe3e9" stroke-width="0.14" text-anchor="middle" font-weight="normal" textLength="22.3" lengthAdjust="spacingAndGlyphs" >Polyline</text>
<circle cx="61.5" cy="40" r="8" stroke="#e1e5ea" fill="none" stroke-width="0.9" />
<line x1="61.5" y1="40" x2="67" y2="34.5" stroke="#57d0c4" stroke-width="1" />
<circle cx="61.5" cy="40" r="0.7" stroke="none" fill="#e1e5ea" stroke-width="1" />
<text x="61.8" y="57.2" font-size="6.3" fill="#dfe3e9" stroke="#dfe3e9" stroke-width="0.14" text-anchor="middle" font-weight="normal" textLength="16" lengthAdjust="spacingAndGlyphs" >Circle</text>
<path d="M59.8 60.150000000000006h3.4l-1.7 2.1z" fill="#cfd5dd"/>
<path d="M79.800 48A15 15 0 0 1 94.500 33" stroke="#e1e5ea" fill="none" stroke-width="0.9" />
<circle cx="79.8" cy="48" r="0.8" stroke="none" fill="#e1e5ea" stroke-width="1" />
<circle cx="94.5" cy="33" r="0.8" stroke="none" fill="#e1e5ea" stroke-width="1" />
<circle cx="84" cy="38" r="0.6" stroke="none" fill="#e1e5ea" stroke-width="1" />
<text x="86.3" y="57.2" font-size="6.3" fill="#dfe3e9" stroke="#dfe3e9" stroke-width="0.14" text-anchor="middle" font-weight="normal" textLength="9.5" lengthAdjust="spacingAndGlyphs" >Arc</text>
<path d="M84.5 60.150000000000006h3.4l-1.7 2.1z" fill="#cfd5dd"/>
<rect x="100.500" y="34.500" width="7" height="4.500" fill="none" stroke="#e1e5ea" stroke-width="0.9"/>
<path d="M111.7 36.0h3.2l-1.6 2z" fill="#cfd5dd"/>
<ellipse cx="104" cy="49.500" rx="3.800" ry="2.300" fill="none" stroke="#e1e5ea" stroke-width="0.8" stroke-dasharray="1.500 0.700"/>
<circle cx="104" cy="49.5" r="0.6" stroke="none" fill="#e1e5ea" stroke-width="1" />
<path d="M111.7 48.8h3.2l-1.6 2z" fill="#cfd5dd"/>
<path d="M100.500 59h7.500M100.500 65.500h7.500" stroke="#e1e5ea" stroke-width="0.9"/><rect x="101.500" y="60.500" width="5.500" height="3.600" fill="#69737f"/>
<path d="M111.7 61.5h3.2l-1.6 2z" fill="#cfd5dd"/>
<text x="57.8" y="77.3" font-size="6.3" fill="#d3d8df" stroke="#d3d8df" stroke-width="0.14" text-anchor="middle" font-weight="normal" textLength="14.5" lengthAdjust="spacingAndGlyphs" >Draw</text>
<path d="M67.55 74.2h3.6l-1.8 2.2z" fill="#d8dde4"/>
<path d="M127.800 33v8.400M123.600 37.200h8.400M126.300 34.500l1.500-1.600 1.500 1.600M126.300 39.900l1.500 1.600 1.500-1.600M125.100 35.700l-1.600 1.500 1.600 1.500M130.500 35.700l1.600 1.500-1.600 1.500" stroke="#e8ebef" stroke-width="0.9" fill="none"/>
<text x="135.8" y="39.3" font-size="6.3" fill="#dfe3e9" stroke="#dfe3e9" stroke-width="0.14" text-anchor="start" font-weight="normal" textLength="16.2" lengthAdjust="spacingAndGlyphs" >Move</text>
<circle cx="125.200" cy="47" r="1.200" fill="none" stroke="#e1e5ea" stroke-width="0.7"/><path d="M127 47h2.500" stroke="#e1e5ea" stroke-width="0.700"/><ellipse cx="126" cy="51.500" rx="2" ry="1.500" fill="none" stroke="#e1e5ea" stroke-width="0.7"/><ellipse cx="130" cy="51.500" rx="2" ry="1.500" fill="none" stroke="#57c4d0" stroke-width="0.7"/>
<text x="135.8" y="52.2" font-size="6.3" fill="#dfe3e9" stroke="#dfe3e9" stroke-width="0.14" text-anchor="start" font-weight="normal" textLength="14.5" lengthAdjust="spacingAndGlyphs" >Copy</text>
<path d="M124.300 58.300h3.500v8h-3.500zM127.800 66.300h4.500l-2.200-5.500v-2.500" stroke="#e1e5ea" stroke-width="0.8" fill="none"/>
<text x="135.8" y="64.7" font-size="6.3" fill="#dfe3e9" stroke="#dfe3e9" stroke-width="0.14" text-anchor="start" font-weight="normal" textLength="19.5" lengthAdjust="spacingAndGlyphs" >Stretch</text>
<path d="M169.700 35a3.600 3.600 0 1 1-3-1.300" stroke="#e1e5ea" stroke-width="0.9" fill="none"/><path d="M166 32.300l2.300 1.300-2.200 1.500z" fill="#e1e5ea"/>
<text x="174" y="39.3" font-size="6.3" fill="#dfe3e9" stroke="#dfe3e9" stroke-width="0.14" text-anchor="start" font-weight="normal" textLength="18.2" lengthAdjust="spacingAndGlyphs" >Rotate</text>
<path d="M166.500 46l-3.500 7h3.500zM166.500 46l3.500 7h-3.500" stroke="#e1e5ea" stroke-width="0.7" fill="none"/><path d="M166.500 44.800v9" stroke="#e1e5ea" stroke-width="0.5" stroke-dasharray="1 0.600"/>
<text x="174" y="52.2" font-size="6.3" fill="#dfe3e9" stroke="#dfe3e9" stroke-width="0.14" text-anchor="start" font-weight="normal" textLength="17.5" lengthAdjust="spacingAndGlyphs" >Mirror</text>
<rect x="162.500" y="58.500" width="8" height="7.500" fill="none" stroke="#aeb5bf" stroke-width="0.7"/><rect x="162.500" y="62" width="4.500" height="4" fill="none" stroke="#e8ebef" stroke-width="0.8"/>
<text x="174" y="64.7" font-size="6.3" fill="#dfe3e9" stroke="#dfe3e9" stroke-width="0.14" text-anchor="start" font-weight="normal" textLength="14" lengthAdjust="spacingAndGlyphs" >Scale</text>
<path d="M200 33.500h3M205 33.500h3M202 34.500l3.800 6M206.500 34.500l-3.500 6" stroke="#e1e5ea" stroke-width="0.9" fill="none"/><circle cx="203" cy="40" r="1" fill="none" stroke="#e1e5ea" stroke-width="0.6"/><circle cx="206" cy="40" r="1" fill="none" stroke="#e1e5ea" stroke-width="0.6"/>
<text x="211" y="39.3" font-size="6.3" fill="#dfe3e9" stroke="#dfe3e9" stroke-width="0.14" text-anchor="start" font-weight="normal" textLength="12.3" lengthAdjust="spacingAndGlyphs" >Trim</text>
<path d="M228.4 36.0h3.2l-1.6 2z" fill="#cfd5dd"/>
<path d="M199.300 53.500v-3a5 5 0 0 1 5-5h3" stroke="#e1e5ea" stroke-width="0.8" fill="none" stroke-dasharray="2.400 0.800"/>
<text x="210.8" y="52.2" font-size="6.3" fill="#dfe3e9" stroke="#dfe3e9" stroke-width="0.14" text-anchor="start" font-weight="normal" textLength="13.2" lengthAdjust="spacingAndGlyphs" >Fillet</text>
<path d="M229.4 48.8h3.2l-1.6 2z" fill="#cfd5dd"/>
<rect x="199.5" y="58.8" width="3.200" height="2.800" fill="none" stroke="#e1e5ea" stroke-width="0.7"/>
<rect x="204" y="58.8" width="3.200" height="2.800" fill="none" stroke="#e1e5ea" stroke-width="0.7"/>
<rect x="199.5" y="63.3" width="3.200" height="2.800" fill="none" stroke="#57c4b0" stroke-width="0.7"/>
<rect x="204" y="63.3" width="3.200" height="2.800" fill="none" stroke="#57c4b0" stroke-width="0.7"/>
<text x="210.8" y="64.7" font-size="6.3" fill="#dfe3e9" stroke="#dfe3e9" stroke-width="0.14" text-anchor="start" font-weight="normal" textLength="15.2" lengthAdjust="spacingAndGlyphs" >Array</text>
<path d="M229.4 61.5h3.2l-1.6 2z" fill="#cfd5dd"/>
<path d="M241 39.800l6-7 1.300 1-6 7z" fill="#f3e6c0"/><path d="M242.300 40.800l6-7 1 .9-6 7z" fill="#e8bc48"/><path d="M240.300 40.600l.7-1.200 2.300 1.800-1.300.8z" fill="#e8608a"/><path d="M239.500 41.800h9" stroke="#5f8f8a" stroke-width="0.600"/>
<rect x="239.800" y="47.800" width="6.800" height="5.600" rx="0.800" fill="#6c7682" stroke="#9adbd6" stroke-width="0.800"/><path d="M241 47.500l1.500-1.300h6v5l-1.600 1.500" stroke="#9adbd6" stroke-width="0.700" fill="none"/><rect x="241.500" y="49.200" width="3.400" height="2.800" fill="#4a535f"/>
<path d="M248.500 59H243a3.200 3.200 0 0 0 0 6.400h5.500M248.500 61.100h-5.200a1.100 1.100 0 0 0 0 2.200h5.200" stroke="#a8e0dc" stroke-width="0.800" fill="none"/>
<text x="184.0" y="77.3" font-size="6.3" fill="#d3d8df" stroke="#d3d8df" stroke-width="0.14" text-anchor="middle" font-weight="normal" textLength="19.5" lengthAdjust="spacingAndGlyphs" >Modify</text>
<path d="M196.25 74.2h3.6l-1.8 2.2z" fill="#d8dde4"/>
<path d="M260.400 47.500l5.800-14.300h1l5.800 14.300M262.600 42.700h8.200" stroke="#f2f4f6" stroke-width="1.700" fill="none"/>
<text x="266.5" y="57.2" font-size="6.3" fill="#dfe3e9" stroke="#dfe3e9" stroke-width="0.14" text-anchor="middle" font-weight="normal" textLength="10.5" lengthAdjust="spacingAndGlyphs" >Text</text>
<path d="M264.5 60.150000000000006h3.4l-1.7 2.1z" fill="#cfd5dd"/>
<path d="M286.500 32v16.500M302.500 32v16.500M286.500 35.300h16" stroke="#e1e5ea" stroke-width="0.8" fill="none"/><path d="M286.500 35.300l2-1v2zM302.500 35.300l-2-1v2z" fill="#e1e5ea"/>
<path d="M294.500 41v2.500M291 42l1.500 2M298 42l-1.500 2M289 45.500l2.500.8M300 45.500l-2.500.8" stroke="#e8c24a" stroke-width="1" fill="none"/>
<text x="294.7" y="57.2" font-size="6.3" fill="#dfe3e9" stroke="#dfe3e9" stroke-width="0.14" text-anchor="middle" font-weight="normal" textLength="29" lengthAdjust="spacingAndGlyphs" >Dimension</text>
<path d="M314.300 33v7.500M322.300 33v7.500M314.300 36.800h8" stroke="#dfe8ea" stroke-width="0.9" fill="none"/>
<text x="326" y="39.3" font-size="6.3" fill="#dfe3e9" stroke="#dfe3e9" stroke-width="0.14" text-anchor="start" font-weight="normal" textLength="16.5" lengthAdjust="spacingAndGlyphs" >Linear</text>
<path d="M346.4 36.0h3.2l-1.6 2z" fill="#cfd5dd"/>
<path d="M314.500 52.500c1-4 2.500-5.500 5-5.500" stroke="#e1e5ea" stroke-width="0.8" fill="none"/><circle cx="321" cy="47" r="1.400" fill="none" stroke="#e1e5ea" stroke-width="0.7"/><path d="M313.800 53.200l.4-2.200 1.600 1.300z" fill="#e1e5ea"/>
<text x="326" y="52.2" font-size="6.3" fill="#dfe3e9" stroke="#dfe3e9" stroke-width="0.14" text-anchor="start" font-weight="normal" textLength="17.5" lengthAdjust="spacingAndGlyphs" >Leader</text>
<path d="M347.9 48.8h3.2l-1.6 2z" fill="#cfd5dd"/>
<path d="M314.300 58.500v7.500M322.800 58.500v7.500M314.300 60.500h8.500M314.300 63h8.500M314.300 65.500h8.500M317 60.500v5M320 60.500v5" stroke="#e1e5ea" stroke-width="0.8" fill="none"/>
<text x="326.5" y="64.7" font-size="6.3" fill="#dfe3e9" stroke="#dfe3e9" stroke-width="0.14" text-anchor="start" font-weight="normal" textLength="13.5" lengthAdjust="spacingAndGlyphs" >Table</text>
<text x="301.0" y="77.3" font-size="6.3" fill="#d3d8df" stroke="#d3d8df" stroke-width="0.14" text-anchor="middle" font-weight="normal" textLength="31" lengthAdjust="spacingAndGlyphs" >Annotation</text>
<path d="M319.0 74.2h3.6l-1.8 2.2z" fill="#d8dde4"/>
<rect x="356" y="30" width="31" height="38.800" fill="#3f5169" stroke="#6d8fae" stroke-width="0.700"/>
<path d="M362.500 36.500l7-3.500 7 1.500-7 3.800z" fill="#eef0f3"/><path d="M362.500 39.800l7-3.300 7 1.500-7 3.600z" fill="#d6a8a8"/><path d="M362.500 39l7 2 7-2.500" stroke="#eef0f3" stroke-width="0.800" fill="none"/><path d="M362.500 43l7-3.300 7 1.500-7 3.600z" fill="#e8ebef"/><rect x="373.800" y="39.500" width="6.700" height="9" fill="#f2f4f6"/><rect x="374.800" y="40.800" width="4.700" height="3" fill="#3aa0e8"/><rect x="375.500" y="45.500" width="3" height="1.500" fill="#b9bfc8"/>
<text x="371.7" y="57.2" font-size="6.3" fill="#dfe3e9" stroke="#dfe3e9" stroke-width="0.14" text-anchor="middle" font-weight="normal" textLength="14.8" lengthAdjust="spacingAndGlyphs" >Layer</text>
<text x="371.7" y="64.7" font-size="6.3" fill="#dfe3e9" stroke="#dfe3e9" stroke-width="0.14" text-anchor="middle" font-weight="normal" textLength="29.5" lengthAdjust="spacingAndGlyphs" >Properties</text>
<rect x="389" y="31.5" width="109.5" height="10.8" fill="#4a5565" />
<circle cx="394.2" cy="35.465" r="2.875" fill="#f5d25e"/><path d="M392.705 37.42h2.9899999999999998v1.38h-2.9899999999999998z" fill="#f5d25e"/><rect x="393.05" y="38.8" width="2.3" height="2.07" fill="#e8ebef"/>
<circle cx="404.2" cy="36.8" r="1.9949999999999999" fill="#f3c944"/>
<path d="M406.82 36.80L408.19 36.80M406.06 38.66L407.02 39.62M404.20 39.42L404.20 40.79M402.34 38.66L401.38 39.62M401.57 36.80L400.21 36.80M402.34 34.94L401.38 33.98M404.20 34.17L404.20 32.81M406.06 34.94L407.02 33.98" stroke="#f3c944" stroke-width="0.9450000000000001"/>
<rect x="411.31" y="36.655" width="5.9799999999999995" height="4.369999999999999" fill="#f0c040"/><path d="M414.07 36.655v-1.8399999999999999a1.9549999999999998 1.9549999999999998 0 0 1 3.9099999999999997 0v0.575" stroke="#f0c040" stroke-width="1.15" fill="none"/><rect x="413.61" y="38.035" width="1.38" height="1.7249999999999999" fill="#6b5310"/>
<rect x="421.3" y="33.4" width="7.8" height="7.4" fill="#fdfdfd" />
<text x="432" y="39.3" font-size="6.3" fill="#aeb6c2" stroke="#aeb6c2" stroke-width="0.14" text-anchor="start" font-weight="normal" >0</text>
<path d="M493.2 35.9h3.6l-1.8 2.2z" fill="#dfe3e8"/>
<path d="M390.0 48.2l5-2.300 4 1.200-5 2.500z" fill="#eef0f3"/>
<circle cx="396.8" cy="51.3" r="1.5" stroke="none" fill="#57c9b4" stroke-width="1" />
<rect x="396.2" y="52.5" width="1.2" height="1.5" fill="#57c9b4" />
<path d="M402.0 48l5-2.300 4 1.200-5 2.500z" fill="#eef0f3"/>
<path d="M402.0 49.5l4 1.400 5-2.500M402.0 51l4 1.400 5-2.500" stroke="#c4cad3" stroke-width="0.9" fill="none"/>
<path d="M407.500 53.500l3-3 .9.900-3 3z" fill="#aeb5bf"/>
<path d="M415.0 48.2l5-2.300 4 1.200-5 2.500z" fill="#eef0f3"/>
<path d="M419.500 51.500h4.500M419.500 53.300h4.500M421 50.300v4.200M422.800 50.300v4.200" stroke="#57c9b4" stroke-width="0.800"/>
<path d="M428.0 48.2l5-2.300 4 1.200-5 2.500z" fill="#eef0f3"/>
<rect x="433.05" y="51.275" width="3.9000000000000004" height="2.8499999999999996" fill="#3fbfa8"/><path d="M434.85 51.275v-1.2000000000000002a1.275 1.275 0 0 1 2.55 0v0.375" stroke="#3fbfa8" stroke-width="0.75" fill="none"/><rect x="434.55" y="52.175" width="0.8999999999999999" height="1.125" fill="#6b5310"/>
<path d="M441.500 50.500l4.500-2 4 1.200-4.500 2.200zM441.500 52.300l4 1.400 4.500-2.200M441.500 54l4 1.400 4.500-2.200" fill="#c4cad3" stroke="#eef0f3" stroke-width="0.800"/><path d="M444.500 45.500h3.500v2.300h-3.500z" fill="#5aa6e0"/><path d="M449 47l2.500 1.500-1 1" stroke="#eef0f3" stroke-width="0.700" fill="none"/>
<path d="M390.0 60.5l5-2.300 4 1.200-5 2.500z" fill="#eef0f3"/>
<path d="M390.0 62.0l4 1.400 5-2.500M390.0 63.5l4 1.400 5-2.500" stroke="#c4cad3" stroke-width="0.9" fill="none"/>
<circle cx="397.3" cy="63.3" r="1.6" stroke="none" fill="#f5c840" stroke-width="1" />
<rect x="396.7" y="64.5" width="1.2" height="1.5" fill="#e8ebef" />
<path d="M402.0 60.5l5-2.300 4 1.200-5 2.500z" fill="#eef0f3"/>
<path d="M402.0 62.0l4 1.400 5-2.500M402.0 63.5l4 1.400 5-2.500" stroke="#c4cad3" stroke-width="0.9" fill="none"/>
<path d="M407.500 66l3-3 .9.900-3 3z" fill="#aeb5bf"/>
<path d="M415.0 60.5l5-2.300 4 1.200-5 2.500z" fill="#eef0f3"/>
<path d="M415.0 62.0l4 1.400 5-2.500M415.0 63.5l4 1.400 5-2.500" stroke="#c4cad3" stroke-width="0.9" fill="none"/>
<path d="M421.800 66.500v-3.500M420.300 64.300l1.500-1.800 1.500 1.800z" stroke="#e8d25a" stroke-width="0.800" fill="#e8d25a"/>
<path d="M428.0 60.5l5-2.300 4 1.200-5 2.500z" fill="#eef0f3"/>
<rect x="433.05" y="63.775" width="3.9000000000000004" height="2.8499999999999996" fill="#f0c840"/><path d="M434.85 63.775v-1.2000000000000002a1.275 1.275 0 0 1 2.55 0v0.375" stroke="#f0c840" stroke-width="0.75" fill="none"/><rect x="434.55" y="64.675" width="0.8999999999999999" height="1.125" fill="#6b5310"/>
<path d="M441.0 60.5l5-2.300 4 1.200-5 2.500z" fill="#eef0f3"/>
<path d="M441.0 62.0l4 1.400 5-2.500M441.0 63.5l4 1.400 5-2.500" stroke="#c4cad3" stroke-width="0.9" fill="none"/>
<circle cx="448.300" cy="64.300" r="2" fill="#e8d84a"/><path d="M447.300 64.300l.8.800 1.300-1.600" stroke="#3a4452" stroke-width="0.600" fill="none"/>
<text x="453.2" y="52.2" font-size="6.3" fill="#dfe3e9" stroke="#dfe3e9" stroke-width="0.14" text-anchor="start" font-weight="normal" textLength="38.2" lengthAdjust="spacingAndGlyphs" >Make Current</text>
<text x="453.2" y="64.7" font-size="6.3" fill="#dfe3e9" stroke="#dfe3e9" stroke-width="0.14" text-anchor="start" font-weight="normal" textLength="34.2" lengthAdjust="spacingAndGlyphs" >Match Layer</text>
<text x="425.5" y="77.3" font-size="6.3" fill="#d3d8df" stroke="#d3d8df" stroke-width="0.14" text-anchor="middle" font-weight="normal" textLength="18.5" lengthAdjust="spacingAndGlyphs" >Layers</text>
<path d="M437.25 74.2h3.6l-1.8 2.2z" fill="#d8dde4"/>
<path d="M511 31h5a4.500 4.500 0 0 1 4.500 4.500v9h-9.500z" fill="#8cc6ee"/><rect x="503" y="36.300" width="14.500" height="11" fill="#7d8691"/><rect x="503" y="36.300" width="14.500" height="1.300" fill="#9aa3ae"/><circle cx="514" cy="43" r="3.300" fill="#8a8f98" stroke="#a8a0a8" stroke-width="0.800"/><path d="M514 39.700v3.300" stroke="#b0a8b0" stroke-width="0.700"/><rect x="503.500" y="44" width="1.300" height="1.300" fill="#dfe3e8"/>
<text x="512.3" y="57.2" font-size="6.3" fill="#dfe3e9" stroke="#dfe3e9" stroke-width="0.14" text-anchor="middle" font-weight="normal" textLength="15" lengthAdjust="spacingAndGlyphs" >Insert</text>
<path d="M510.59999999999997 60.150000000000006h3.4l-1.7 2.1z" fill="#cfd5dd"/>
<rect x="534.500" y="32.500" width="9.500" height="9" fill="#5fbf9a" stroke="#9adbc0" stroke-width="0.600"/><rect x="540.500" y="35" width="11" height="12.500" fill="#3a4452" stroke="#aeb5bf" stroke-width="0.800"/><rect x="538" y="37.500" width="9" height="10" fill="#3a4452" stroke="#8d96a3" stroke-width="0.700"/><path d="M538.500 35l1 8 1.800-2 1.500 3 1.200-.6-1.500-3 2.500-.3z" fill="#fff"/>
<text x="543.5" y="57.2" font-size="6.3" fill="#dfe3e9" stroke="#dfe3e9" stroke-width="0.14" text-anchor="middle" font-weight="normal" textLength="31.5" lengthAdjust="spacingAndGlyphs" >Search and</text>
<text x="543.3" y="64.7" font-size="6.3" fill="#dfe3e9" stroke="#dfe3e9" stroke-width="0.14" text-anchor="middle" font-weight="normal" textLength="22" lengthAdjust="spacingAndGlyphs" >Convert</text>
<rect x="567.500" y="35.500" width="5" height="5" fill="#8d96a3"/><rect x="569.500" y="34" width="4.500" height="4" fill="#c9ced6"/><path d="M573.500 33.500l.5 1.200 1.200.5-1.200.5-.5 1.200-.5-1.200-1.200-.5 1.200-.5z" fill="#f3c944"/><circle cx="573" cy="40" r="1.300" fill="#57c4b0"/>
<text x="578.3" y="39.3" font-size="6.3" fill="#dfe3e9" stroke="#dfe3e9" stroke-width="0.14" text-anchor="start" font-weight="normal" textLength="18.2" lengthAdjust="spacingAndGlyphs" >Create</text>
<rect x="567.500" y="48" width="5" height="5" fill="none" stroke="#c9ced6" stroke-width="0.8"/><path d="M570 53l4.500-4.500 1 1-4.500 4.500z" fill="#e8c24a"/><circle cx="569" cy="52.500" r="1.200" fill="#57c4b0"/>
<text x="578.3" y="52.2" font-size="6.3" fill="#dfe3e9" stroke="#dfe3e9" stroke-width="0.14" text-anchor="start" font-weight="normal" textLength="10.5" lengthAdjust="spacingAndGlyphs" >Edit</text>
<path d="M567 60l2.500 4.500 4.500-5" stroke="#e8ebef" stroke-width="1.300" fill="none"/><path d="M570.500 64.500l4.500-4.500 1 1-4.500 4.500z" fill="#e8c24a"/><rect x="567.500" y="59" width="3" height="2" fill="#d85a5a"/>
<text x="578.3" y="64.7" font-size="6.3" fill="#dfe3e9" stroke="#dfe3e9" stroke-width="0.14" text-anchor="start" font-weight="normal" textLength="40" lengthAdjust="spacingAndGlyphs" >Edit Attributes</text>
<path d="M621.9 61.5h3.2l-1.6 2z" fill="#cfd5dd"/>
<text x="561.0" y="77.3" font-size="6.3" fill="#d3d8df" stroke="#d3d8df" stroke-width="0.14" text-anchor="middle" font-weight="normal" textLength="15.5" lengthAdjust="spacingAndGlyphs" >Block</text>
<path d="M571.25 74.2h3.6l-1.8 2.2z" fill="#d8dde4"/>
<rect x="638.500" y="32.500" width="9" height="14" rx="0.500" fill="#e8ebef"/><rect x="640" y="34" width="6" height="4" fill="#5aa6e0"/><rect x="640" y="39.500" width="6" height="1" fill="#8d96a3"/><rect x="640" y="42" width="6" height="1" fill="#8d96a3"/><path d="M645.500 42l6.500 4.500-1.500 2-6.500-4.500z" fill="#e8c24a"/><path d="M651 44.800l3 2-1.500 2.200-3-2z" fill="#f2f0e6"/>
<text x="646.3" y="57.2" font-size="6.3" fill="#dfe3e9" stroke="#dfe3e9" stroke-width="0.14" text-anchor="middle" font-weight="normal" textLength="17.5" lengthAdjust="spacingAndGlyphs" >Match</text>
<text x="646.3" y="64.7" font-size="6.3" fill="#dfe3e9" stroke="#dfe3e9" stroke-width="0.14" text-anchor="middle" font-weight="normal" textLength="29" lengthAdjust="spacingAndGlyphs" >Properties</text>
<path d="M667.300 37L667.30 32.80A4.200 4.200 0 0 1 670.94 34.90z" fill="#e8524a"/>
<path d="M667.300 37L670.94 34.90A4.200 4.200 0 0 1 670.94 39.10z" fill="#f0a030"/>
<path d="M667.300 37L670.94 39.10A4.200 4.200 0 0 1 667.30 41.20z" fill="#e8d040"/>
<path d="M667.300 37L667.30 41.20A4.200 4.200 0 0 1 663.66 39.10z" fill="#5fbf6a"/>
<path d="M667.300 37L663.66 39.10A4.200 4.200 0 0 1 663.66 34.90z" fill="#4aa3e6"/>
<path d="M667.300 37L663.66 34.90A4.200 4.200 0 0 1 667.30 32.80z" fill="#a060d0"/>
<path d="M663.500 46.800h8M663.500 49.500h8M663.500 52.300h8" stroke="#eef1f4" stroke-width="1.100"/>
<path d="M663.500 60h8M663.500 65h8" stroke="#eef1f4" stroke-width="0.800"/><path d="M663.500 62.500h8" stroke="#eef1f4" stroke-width="0.800" stroke-dasharray="2 1"/>
<rect x="673.5" y="32" width="94.3" height="10" fill="#4a5565" />
<path d="M762.6 36.15h3.8l-1.9 2.3z" fill="#e3e7ec"/>
<rect x="673.5" y="44" width="94.3" height="11.2" fill="#4a5565" />
<path d="M762.6 48.75h3.8l-1.9 2.3z" fill="#e3e7ec"/>
<rect x="673.5" y="57.2" width="94.3" height="10.6" fill="#4a5565" />
<path d="M762.6 61.65h3.8l-1.9 2.3z" fill="#e3e7ec"/>
<rect x="676.8" y="33.3" width="8.6" height="7.6" fill="#fdfdfd" />
<text x="687" y="39.3" font-size="6.3" fill="#eef1f4" stroke="#eef1f4" stroke-width="0.14" text-anchor="start" font-weight="normal" textLength="21.5" lengthAdjust="spacingAndGlyphs" >ByLayer</text>
<line x1="676.8" y1="49.5" x2="709.5" y2="49.5" stroke="#eef1f4" stroke-width="0.7" />
<text x="711.3" y="51.9" font-size="6.3" fill="#eef1f4" stroke="#eef1f4" stroke-width="0.14" text-anchor="start" font-weight="normal" textLength="21.5" lengthAdjust="spacingAndGlyphs" >ByLayer</text>
<line x1="676.8" y1="62.4" x2="709.5" y2="62.4" stroke="#eef1f4" stroke-width="0.7" />
<text x="711.3" y="64.9" font-size="6.3" fill="#eef1f4" stroke="#eef1f4" stroke-width="0.14" text-anchor="start" font-weight="normal" textLength="21.5" lengthAdjust="spacingAndGlyphs" >ByLayer</text>
<text x="693.0" y="77.3" font-size="6.3" fill="#d3d8df" stroke="#d3d8df" stroke-width="0.14" text-anchor="middle" font-weight="normal" textLength="28" lengthAdjust="spacingAndGlyphs" >Properties</text>
<path d="M709.5 74.2h3.6l-1.8 2.2z" fill="#d8dde4"/>
<path d="M764.300 77h2.800v-2.800M767 77l-2.800-2.800" stroke="#c4cad3" stroke-width="0.700" fill="none"/>
<rect x="773.500" y="36" width="5" height="4.500" fill="#4a7fb5" stroke="#8fbfe8" stroke-width="0.500"/><circle cx="778.500" cy="44.300" r="2.300" fill="#8d96a3" stroke="#dfe3e8" stroke-width="0.600"/><path d="M773.500 34.500h-1v13.500h1M783.500 38v10h-1" stroke="#dfe3e8" stroke-width="0.700" fill="none"/>
<circle cx="785.5" cy="35.8" r="2.09" fill="#f5c542"/>
<path d="M788.25 35.80L789.68 35.80M787.44 37.74L788.46 38.76M785.50 38.55L785.50 39.98M783.56 37.74L782.54 38.76M782.75 35.80L781.32 35.80M783.56 33.86L782.54 32.84M785.50 33.05L785.50 31.62M787.44 33.86L788.46 32.84" stroke="#f5c542" stroke-width="0.9900000000000001"/>
<text x="781.5" y="57.2" font-size="6.3" fill="#dfe3e9" stroke="#dfe3e9" stroke-width="0.14" text-anchor="middle" font-weight="normal" textLength="17" lengthAdjust="spacingAndGlyphs" >Group</text>
<path d="M796 33h-1v8h1M802.500 33h1v8h-1" stroke="#dfe3e8" stroke-width="0.700" fill="none"/><rect x="797" y="34" width="2.500" height="2.500" fill="#4a7fb5"/><circle cx="801" cy="38.500" r="1.400" fill="#d85a6a"/><path d="M800 33.500l2 2m0-2l-2 2" stroke="#e8524a" stroke-width="0.800"/>
<path d="M796 45.500h-1v8h1M802.500 45.500h1v8h-1" stroke="#dfe3e8" stroke-width="0.700" fill="none"/><rect x="797" y="47" width="2.500" height="2.500" fill="#8d96a3"/><path d="M798.500 53l4-4 1 1-4 4z" fill="#e8c24a"/>
<rect x="792.500" y="56.300" width="13.300" height="11.800" fill="#2d5a78" stroke="#5aa0c8" stroke-width="0.600"/><path d="M796 58.500h-1v7.500h1M802.500 58.500h1v7.500h-1" stroke="#dfe3e8" stroke-width="0.700" fill="none"/><rect x="797" y="59.500" width="3" height="3" fill="#5fbf6a"/><path d="M799.500 61l.5 5 1.200-1.200 1 1.800.8-.4-1-1.800 1.500-.3z" fill="#fff"/>
<text x="784.8" y="77.3" font-size="6.3" fill="#d3d8df" stroke="#d3d8df" stroke-width="0.14" text-anchor="middle" font-weight="normal" textLength="20.5" lengthAdjust="spacingAndGlyphs" >Groups</text>
<path d="M797.55 74.2h3.6l-1.8 2.2z" fill="#d8dde4"/>
<rect x="818.500" y="38.700" width="15.500" height="3.200" fill="#f3cf4a"/><path d="M820.500 38.700v1.500M822.500 38.700v1.500M824.500 38.700v1.500M826.500 38.700v1.500M828.500 38.700v1.500M830.500 38.700v1.500M832.500 38.700v1.500" stroke="#8a6a10" stroke-width="0.400"/>
<text x="826.3" y="57.2" font-size="6.3" fill="#dfe3e9" stroke="#dfe3e9" stroke-width="0.14" text-anchor="middle" font-weight="normal" textLength="24.5" lengthAdjust="spacingAndGlyphs" >Measure</text>
<path d="M824.3 60.150000000000006h3.4l-1.7 2.1z" fill="#cfd5dd"/>
<rect x="849" y="35.500" width="6" height="5" fill="#4a8fd0" stroke="#cfe4f5" stroke-width="0.700"/><path d="M846.500 33.500l.8 6 1.300-1.500 1 2.200.9-.4-1-2.200 1.800-.2z" fill="#fff"/>
<rect x="846.500" y="45.500" width="8.500" height="8" fill="#3f8f58"/><path d="M847 47l1.500 1.500M850 46.500l1.500 2M853 47l1 1.500M847.500 51l2 1M851 51.500l2 1" stroke="#a8e0b0" stroke-width="0.600"/><path d="M850.500 48l.8 5.500 1.300-1.400 1 2 .8-.4-1-2 1.700-.3z" fill="#fff"/>
<rect x="847" y="58.300" width="7.500" height="8.500" fill="none" stroke="#c9ced6" stroke-width="0.800"/><rect x="848.300" y="59.600" width="5" height="1.800" fill="#c9ced6"/><path d="M848.500 63h1.300M850.500 63h1.300M852.500 63h1.300M848.500 65h1.300M850.500 65h1.300M852.500 65h1.300" stroke="#c9ced6" stroke-width="1.100"/>
<text x="829.0" y="77.3" font-size="6.3" fill="#d3d8df" stroke="#d3d8df" stroke-width="0.14" text-anchor="middle" font-weight="normal" textLength="20.5" lengthAdjust="spacingAndGlyphs" >Utilities</text>
<path d="M841.75 74.2h3.6l-1.8 2.2z" fill="#d8dde4"/>
<rect x="866" y="34" width="11" height="13.500" rx="0.800" fill="#d8a050"/><rect x="869" y="32.800" width="5" height="2.500" rx="0.500" fill="#e8ebef"/><path d="M871.500 32l1 1.200h-2z" fill="#e8ebef"/><path d="M870.500 37.500h6.500l3 3v8.300h-9.500z" fill="#eef0f3"/><path d="M877 37.500v3h3z" fill="#b9bfc8"/>
<text x="873" y="57.2" font-size="6.3" fill="#dfe3e9" stroke="#dfe3e9" stroke-width="0.14" text-anchor="middle" font-weight="normal" textLength="14.5" lengthAdjust="spacingAndGlyphs" >Paste</text>
<path d="M871.3 60.150000000000006h3.4l-1.7 2.1z" fill="#cfd5dd"/>
<rect x="889" y="33" width="5.500" height="6.500" fill="none" stroke="#dfe3e8" stroke-width="0.800"/><path d="M890 35h3.500M890 37h2" stroke="#dfe3e8" stroke-width="0.600"/><path d="M893 37.500l4 4m0-4l-4 4" stroke="#dfe3e8" stroke-width="0.900"/>
<path d="M900.1999999999999 36.0h3.2l-1.6 2z" fill="#cfd5dd"/>
<path d="M889.500 45.500h4l1.500 1.500v5h-5.500z" fill="#b9bfc8"/><path d="M892 47.500h3.500l1.500 1.500v5h-5z" fill="#e8ebef"/>
<path d="M900.1999999999999 48.8h3.2l-1.6 2z" fill="#cfd5dd"/>
<text x="883" y="77.3" font-size="6.3" fill="#d3d8df" stroke="#d3d8df" stroke-width="0.14" text-anchor="middle" font-weight="normal" textLength="27" lengthAdjust="spacingAndGlyphs" >Clipboard</text>
</g>
<g id="filetabs">
<rect x="0" y="80" width="1024" height="16" fill="#1f252e" />
<path d="M8.500 85.500h7M8.500 88h7M8.500 90.500h7" stroke="#e8ebef" stroke-width="0.900"/>
<path d="M24 95.500l3-14.500h21l-3 14.500z" fill="#222933"/>
<line x1="27" y1="82" x2="24" y2="94" stroke="#39414d" stroke-width="0.8" />
<text x="30.5" y="90.7" font-size="6.3" fill="#dfe3e9" stroke="#dfe3e9" stroke-width="0.14" text-anchor="start" font-weight="normal" textLength="13.3" lengthAdjust="spacingAndGlyphs" >Start</text>
<path d="M48.500 96l3.500-15.500h140.500l-3.500 15.500z" fill="#2e3643"/>
<text x="56.8" y="90.7" font-size="6.3" fill="#f4f6f8" stroke="#f4f6f8" stroke-width="0" text-anchor="start" font-weight="bold" textLength="121.5" lengthAdjust="spacingAndGlyphs" >Autodesk AutoCAD ...Tiny_House-2D_HC*</text>
<path d="M183 86l4.500 4.500m0-4.500l-4.500 4.500" stroke="#cfd5dd" stroke-width="0.900"/>
<path d="M199.500 88.300h6M202.500 85.300v6" stroke="#eef1f4" stroke-width="1"/>
<line x1="213.5" y1="82" x2="210.5" y2="94" stroke="#39414d" stroke-width="0.8" />
<rect x="0" y="95.5" width="1024" height="1.3" fill="#39414e" />
</g>
<g id="cmdline">
<rect x="205" y="543.5" width="32" height="13" fill="#242b34" />
<path d="M208.500 546v8M210.300 546v8" stroke="#b9bfc8" stroke-width="0.900" stroke-dasharray="1 0.800"/>
<path d="M214.800 548l4.600 4.600m0-4.600l-4.600 4.600" stroke="#dfe3e8" stroke-width="1.100"/>
<path d="M226 553.500l4-4.500a2.300 2.300 0 1 1 1.500 1.500l-4.500 4z" fill="#dfe3e8"/>
<rect x="237" y="543.5" width="580" height="13" fill="#ffffff" />
<path d="M240 553l5-6" stroke="#e3e6ea" stroke-width="1"/>
<path d="M248.5 549.4h4l-2.0 2.4z" fill="#333"/>
<text x="256" y="553" font-size="6.4" fill="#222" stroke="#222" stroke-width="0" text-anchor="start" font-weight="bold" style="font-family:&quot;Liberation Mono&quot;,monospace" textLength="15.5" lengthAdjust="spacingAndGlyphs" >LINE</text>
<text x="274.5" y="553" font-size="6.4" fill="#333" stroke="#333" stroke-width="0" text-anchor="start" font-weight="bold" style="font-family:&quot;Liberation Mono&quot;,monospace" textLength="73.5" lengthAdjust="spacingAndGlyphs" >Specify first point:</text>
<path d="M805.500 551.500l2-2.500 2 2.500z" fill="#333"/>
</g>
<g id="statusbar">
<rect x="0" y="557" width="1024" height="19" fill="#252c37" />
<rect x="0" y="557" width="1024" height="0.8" fill="#343c48" />
<rect x="716.5" y="559" width="307.5" height="15.5" fill="#2f3744" />
<line x1="743" y1="559" x2="743" y2="574.5" stroke="#232a34" stroke-width="1" />
<line x1="777.5" y1="559" x2="777.5" y2="574.5" stroke="#232a34" stroke-width="1" />
<line x1="833" y1="559" x2="833" y2="574.5" stroke="#232a34" stroke-width="1" />
<line x1="867.7" y1="559" x2="867.7" y2="574.5" stroke="#232a34" stroke-width="1" />
<line x1="926" y1="559" x2="926" y2="574.5" stroke="#232a34" stroke-width="1" />
<line x1="948.4" y1="559" x2="948.4" y2="574.5" stroke="#232a34" stroke-width="1" />
<line x1="962.6" y1="559" x2="962.6" y2="574.5" stroke="#232a34" stroke-width="1" />
<line x1="978.5" y1="559" x2="978.5" y2="574.5" stroke="#232a34" stroke-width="1" />
<line x1="994.3" y1="559" x2="994.3" y2="574.5" stroke="#232a34" stroke-width="1" />
<line x1="1009.5" y1="559" x2="1009.5" y2="574.5" stroke="#232a34" stroke-width="1" />
<path d="M8.500 563.500h8.500M8.500 566.300h8.500M8.500 569h8.500" stroke="#e8ebef" stroke-width="1"/>
<path d="M22 575.500l4-16.500h33.500l-4 16.500z" fill="#3c4654"/>
<text x="31" y="569" font-size="6.3" fill="#ffffff" stroke="#ffffff" stroke-width="0" text-anchor="start" font-weight="bold" textLength="19" lengthAdjust="spacingAndGlyphs" >Model</text>
<text x="63" y="569" font-size="6.3" fill="#dfe3e9" stroke="#dfe3e9" stroke-width="0.14" text-anchor="start" font-weight="normal" textLength="86.5" lengthAdjust="spacingAndGlyphs" >ISO A1-Plans Sections Elevs W1</text>
<line x1="157.0" y1="561" x2="154.0" y2="573" stroke="#4a5462" stroke-width="0.8" />
<text x="163" y="569" font-size="6.3" fill="#dfe3e9" stroke="#dfe3e9" stroke-width="0.14" text-anchor="start" font-weight="normal" textLength="87" lengthAdjust="spacingAndGlyphs" >ISO A1-Plans Sections Elevs W2</text>
<line x1="257.5" y1="561" x2="254.5" y2="573" stroke="#4a5462" stroke-width="0.8" />
<text x="263" y="569" font-size="6.3" fill="#dfe3e9" stroke="#dfe3e9" stroke-width="0.14" text-anchor="start" font-weight="normal" textLength="87" lengthAdjust="spacingAndGlyphs" >ISO A1-Plans Sections Elevs W3</text>
<line x1="357.5" y1="561" x2="354.5" y2="573" stroke="#4a5462" stroke-width="0.8" />
<path d="M364.500 566.300h7M368 562.800v7" stroke="#eef1f4" stroke-width="1"/>
<line x1="380" y1="561" x2="377" y2="573" stroke="#4a5462" stroke-width="0.8" />
<rect x="716.5" y="559" width="26" height="15.5" fill="#343d4a" />
<text x="718" y="569.3" font-size="6.2" fill="#eef1f4" stroke="#eef1f4" stroke-width="0" text-anchor="start" font-weight="bold" textLength="21" lengthAdjust="spacingAndGlyphs" >MODEL</text>
<path d="M745.500 564.500h7.500M745.500 567.500h7.500M747.300 562.500v7.500M749.200 562.500v7.500M751.200 562.500v7.500" stroke="#eef1f4" stroke-width="0.800"/>
<path d="M758.500 564h7M758.500 566.500h7M758.500 569h7" stroke="#aeb5bf" stroke-width="1" stroke-dasharray="1 1.500"/>
<path d="M770.8 565.95h3.4l-1.7 2.1z" fill="#d5dae1"/>
<path d="M781.500 562.500v7.500h5.500M781.500 566h2" stroke="#dfe3e8" stroke-width="1" fill="none"/>
<rect x="790.5" y="559.5" width="14" height="14" fill="#5689cc" />
<circle cx="797.5" cy="567" r="3.2" stroke="#eaf2fb" fill="none" stroke-width="0.9" />
<line x1="797.5" y1="567" x2="800.5" y2="562.5" stroke="#eaf2fb" stroke-width="0.8" />
<path d="M806.8 565.95h3.4l-1.7 2.1z" fill="#d5dae1"/>
<path d="M816 562l5 8.500M821.500 562.500l-3 4" stroke="#5fbf9a" stroke-width="0.900"/><path d="M818.500 562v8" stroke="#aeb5bf" stroke-width="0.700"/>
<path d="M827.8 565.95h3.4l-1.7 2.1z" fill="#d5dae1"/>
<rect x="834.5" y="559.5" width="12" height="14" fill="#5689cc" />
<line x1="836.5" y1="571" x2="844.5" y2="562.5" stroke="#eaf2fb" stroke-width="0.9" />
<rect x="847.5" y="559.5" width="12" height="14" fill="#5689cc" />
<rect x="850.500" y="563" width="6.500" height="8" fill="none" stroke="#eaf2fb" stroke-width="0.900"/><path d="M849.500 562h2v2h-2z" fill="#eaf2fb"/>
<path d="M861.8 565.95h3.4l-1.7 2.1z" fill="#d5dae1"/>
<rect x="870" y="559.5" width="11.5" height="14" fill="#5689cc" />
<path d="M872.500 571l3-8 3 8M875.500 566l3.500-3" stroke="#ffffff" stroke-width="1.200" fill="none"/>
<path d="M885.500 571l3-8 3 8M888.500 566l3.500-3" stroke="#eef1f4" stroke-width="1.200" fill="none"/>
<path d="M898.500 571l3-8 3 8" stroke="#eef1f4" stroke-width="1.200" fill="none"/>
<text x="910.5" y="569.5" font-size="6.4" fill="#eef1f4" stroke="#eef1f4" stroke-width="0.14" text-anchor="start" font-weight="normal" textLength="9" lengthAdjust="spacingAndGlyphs" >1:1</text>
<path d="M920.8 565.95h3.4l-1.7 2.1z" fill="#d5dae1"/>
<circle cx="934" cy="566.5" r="2.6" stroke="#eef1f4" fill="none" stroke-width="1.8" />
<path d="M934 562.300v8.400M929.800 566.500h8.400M931 563.500l6 6M937 563.500l-6 6" stroke="#eef1f4" stroke-width="1"/>
<circle cx="934" cy="566.5" r="1.2" stroke="none" fill="#2f3744" stroke-width="1" />
<path d="M943.3 565.95h3.4l-1.7 2.1z" fill="#d5dae1"/>
<path d="M951.500 566.500h9M956 562v9" stroke="#eef1f4" stroke-width="1.100"/>
<rect x="966.500" y="562.500" width="3.500" height="3.500" fill="none" stroke="#dfe3e8" stroke-width="0.800"/><circle cx="973" cy="569" r="1.800" fill="none" stroke="#dfe3e8" stroke-width="0.800"/><path d="M968 568.500v2.500M972 562.500h2.500" stroke="#dfe3e8" stroke-width="0.800"/>
<rect x="981.500" y="563" width="7" height="6" fill="#5a8fc8"/><path d="M985 566l4 4.500" stroke="#f3c944" stroke-width="1.300"/><rect x="984" y="561.500" width="3" height="2" fill="#dfe3e8"/>
<rect x="997.500" y="562.500" width="9" height="8" fill="none" stroke="#dfe3e8" stroke-width="0.900"/><path d="M1000 568l4-3.500" stroke="#dfe3e8" stroke-width="0.800"/>
<path d="M1012 563.500h9M1012 566.500h9M1012 569.500h9" stroke="#eef1f4" stroke-width="1.200"/>
</g>
<g id="layerpanel">
<rect x="19" y="115.3" width="271.5" height="183.5" fill="#3a4452" />
<rect x="19" y="115.3" width="12" height="183.5" fill="#282f3a" />
<path d="M22.500 117.500l4 4m0-4l-4 4" stroke="#eef1f4" stroke-width="1.200"/>
<path d="M22.800 126.500v4M24 127.300l3 1.200-3 1.200z" stroke="#dfe3e8" stroke-width="0.800" fill="#dfe3e8"/>
<circle cx="24.8" cy="138.5" r="1.8" stroke="#dfe3e8" fill="none" stroke-width="1.3" />
<path d="M22 138.500h5.600M24.800 135.700v5.600" stroke="#dfe3e8" stroke-width="0.700"/>
<text transform="translate(27.300,285) rotate(-90)" font-size="5.800" fill="#aeb5bf" textLength="85" lengthAdjust="spacingAndGlyphs">LAYER PROPERTIES MANAGER</text>
<path d="M21.500 293l3.500-1.500 3 1-3.500 1.700zM21.500 295l3.500-1.500 3 1-3.500 1.700z" fill="#dfe3e8"/><rect x="25.500" y="294.500" width="3" height="3" fill="#c4cad3"/>
<text x="34.6" y="128.2" font-size="6.2" fill="#eef1f4" stroke="#eef1f4" stroke-width="0.14" text-anchor="start" font-weight="normal" textLength="67.5" lengthAdjust="spacingAndGlyphs" >Current layer: Viewports</text>
<rect x="220.5" y="119" width="67.5" height="9.5" fill="#4d5868" />
<text x="222.3" y="126" font-size="6" fill="#d5dae1" stroke="#d5dae1" stroke-width="0.14" text-anchor="start" font-weight="normal" textLength="44" lengthAdjust="spacingAndGlyphs" >Search for layer</text>
<circle cx="283" cy="122.8" r="2.2" stroke="#e8ebef" fill="none" stroke-width="0.9" />
<line x1="284.6" y1="124.5" x2="286.8" y2="126.8" stroke="#e8ebef" stroke-width="1" />
<rect x="33.500" y="134" width="4.500" height="3.500" fill="#dfe3e8"/><path d="M35 139.500h5v-3M36.500 141.500h4.500" stroke="#dfe3e8" stroke-width="0.800" fill="none"/><rect x="38.500" y="135.500" width="3" height="5.500" fill="#dfe3e8"/>
<path d="M46 135h3l1 1h4.500v5.500h-8.500z" fill="#dfe3e8"/>
<path d="M62.5 136l4.500-2 3 1-4.500 2.200z" fill="#eef0f3"/><path d="M62.5 138l4.500-2 3 1-4.500 2.200z" fill="#c4cad3"/><path d="M62.5 140l4.500-2 3 1-4.500 2.200z" fill="#eef0f3"/>
<rect x="66" y="138.500" width="4" height="3.500" fill="#3a4452" stroke="#eef1f4" stroke-width="0.700"/>
<path d="M106.0 136l4.500-2 3 1-4.500 2.200z" fill="#eef0f3"/><path d="M106.0 138l4.500-2 3 1-4.500 2.200z" fill="#c4cad3"/><path d="M106.0 140l4.500-2 3 1-4.500 2.200z" fill="#eef0f3"/>
<circle cx="112.0" cy="140" r="1.5" stroke="none" fill="#c8d84a" stroke-width="1" />
<path d="M119.0 136l4.500-2 3 1-4.500 2.200z" fill="#eef0f3"/><path d="M119.0 138l4.500-2 3 1-4.500 2.200z" fill="#c4cad3"/><path d="M119.0 140l4.500-2 3 1-4.500 2.200z" fill="#eef0f3"/>
<circle cx="125.0" cy="140" r="1.5" stroke="none" fill="#57c4b0" stroke-width="1" />
<path d="M131.0 136l4.500-2 3 1-4.500 2.200z" fill="#eef0f3"/><path d="M131.0 138l4.500-2 3 1-4.500 2.200z" fill="#c4cad3"/><path d="M131.0 140l4.500-2 3 1-4.500 2.200z" fill="#eef0f3"/>
<circle cx="137.0" cy="140" r="1.5" stroke="none" fill="#e8524a" stroke-width="1" />
<path d="M143.5 136l4.500-2 3 1-4.500 2.200z" fill="#eef0f3"/><path d="M143.5 138l4.500-2 3 1-4.500 2.200z" fill="#c4cad3"/><path d="M143.5 140l4.500-2 3 1-4.500 2.200z" fill="#eef0f3"/>
<circle cx="149.5" cy="140" r="1.5" stroke="none" fill="#cfd5dd" stroke-width="1" />
<path d="M249.800 137.500a3.300 3.300 0 0 1 6-1.800M256.300 138a3.300 3.300 0 0 1-6 1.800" stroke="#2fbf6a" stroke-width="1.200" fill="none"/><path d="M256.800 134l-.3 2.600-2.400-.8zM249.300 141.500l.3-2.600 2.400.8z" fill="#2fbf6a"/>
<rect x="262.3" y="134" width="3.3" height="3.6" fill="#e8ebef" />
<circle cx="277.8" cy="138" r="2.3" stroke="#eef1f4" fill="none" stroke-width="1.5" />
<path d="M280.60 138.00L282.00 138.00M279.78 139.98L280.77 140.97M277.80 140.80L277.80 142.20M275.82 139.98L274.83 140.97M275.00 138.00L273.60 138.00M275.82 136.02L274.83 135.03M277.80 135.20L277.80 133.80M279.78 136.02L280.77 135.03" stroke="#eef1f4" fill="none" stroke-width="1.3" />
<rect x="33" y="146.5" width="68.5" height="114" fill="#3e4857" />
<rect x="33" y="146.5" width="68.5" height="10" fill="#434d5c" />
<text x="35.4" y="154" font-size="6" fill="#eef1f4" stroke="#eef1f4" stroke-width="0.14" text-anchor="start" font-weight="normal" textLength="16.5" lengthAdjust="spacingAndGlyphs" >Filters</text>
<path d="M93 149.200l-2.300 2.300 2.300 2.300M96.200 149.200l-2.300 2.300 2.300 2.300" stroke="#eef1f4" stroke-width="1.100" fill="none"/>
<rect x="36.500" y="164.800" width="4" height="4" fill="none" stroke="#aeb5bf" stroke-width="0.600"/><path d="M37.500 166.800h2" stroke="#dfe3e8" stroke-width="0.600"/>
<path d="M45.500 166l2.500-1.200 1.800.6-2.500 1.300zM45.500 167.500l2.500-1.200 1.800.6-2.500 1.300zM45.500 169l2.500-1.200 1.800.6-2.500 1.300z" fill="#dfe3e8"/>
<rect x="54.5" y="162.3" width="9" height="9" fill="#717c8c" />
<text x="55.5" y="169.3" font-size="6.2" fill="#ffffff" stroke="#ffffff" stroke-width="0.14" text-anchor="start" font-weight="normal" textLength="7.2" lengthAdjust="spacingAndGlyphs" >All</text>
<path d="M49 172v23.800M49 176.800h6M49 186.200h6M49 195.600h6" stroke="#7c8592" fill="none" stroke-width="0.5" stroke-dasharray="0.800 0.800"/>
<clipPath id="cf"><rect x="33" y="146" width="68.500" height="114"/></clipPath>
<g clip-path="url(#cf)">
<rect x="56" y="174.3" width="3" height="2.500" fill="#dfe3e8"/><rect x="59.5" y="175.3" width="2" height="4" fill="#dfe3e8"/><path d="M57 177.60000000000002h2M57 179.0h4" stroke="#dfe3e8" stroke-width="0.700"/>
<text x="64.8" y="179.0" font-size="6.2" fill="#eef1f4" stroke="#eef1f4" stroke-width="0.14" text-anchor="start" font-weight="normal" textLength="42" lengthAdjust="spacingAndGlyphs" >All Used Layers</text>
<rect x="56" y="183.7" width="3" height="2.500" fill="#dfe3e8"/><rect x="59.5" y="184.7" width="2" height="4" fill="#dfe3e8"/><path d="M57 187.0h2M57 188.39999999999998h4" stroke="#dfe3e8" stroke-width="0.700"/>
<text x="64.8" y="188.39999999999998" font-size="6.2" fill="#eef1f4" stroke="#eef1f4" stroke-width="0.14" text-anchor="start" font-weight="normal" textLength="26" lengthAdjust="spacingAndGlyphs" >Furniture</text>
<rect x="56" y="193.1" width="3" height="2.500" fill="#dfe3e8"/><rect x="59.5" y="194.1" width="2" height="4" fill="#dfe3e8"/><path d="M57 196.4h2M57 197.79999999999998h4" stroke="#dfe3e8" stroke-width="0.700"/>
<text x="64.8" y="197.79999999999998" font-size="6.2" fill="#eef1f4" stroke="#eef1f4" stroke-width="0.14" text-anchor="start" font-weight="normal" textLength="30.5" lengthAdjust="spacingAndGlyphs" >Landscape</text>
</g>
<rect x="35" y="258.5" width="58" height="1.6" fill="#515b6a" />
<rect x="35.200" y="268.500" width="6" height="6" rx="0.800" fill="#f2f4f6"/>
<text x="43.7" y="273.7" font-size="6" fill="#eef1f4" stroke="#eef1f4" stroke-width="0.14" text-anchor="start" font-weight="normal" textLength="29.5" lengthAdjust="spacingAndGlyphs" >Invert filter</text>
<path d="M93 269.200l-2.300 2.300 2.300 2.300M96.200 269.200l-2.300 2.300 2.300 2.300" stroke="#eef1f4" stroke-width="1.100" fill="none"/>
<text x="34.6" y="294" font-size="6" fill="#eef1f4" stroke="#eef1f4" stroke-width="0.14" text-anchor="start" font-weight="normal" textLength="116" lengthAdjust="spacingAndGlyphs" >All: 148 layers displayed of 148 total layers</text>
<rect x="105.5" y="146.7" width="175" height="8.8" fill="#465160" />
<text x="106.3" y="153" font-size="6.1" fill="#eef1f4" stroke="#eef1f4" stroke-width="0.14" text-anchor="start" font-weight="normal" textLength="6.5" lengthAdjust="spacingAndGlyphs" >S..</text>
<text x="116.2" y="153" font-size="6.1" fill="#eef1f4" stroke="#eef1f4" stroke-width="0.14" text-anchor="start" font-weight="normal" textLength="18" lengthAdjust="spacingAndGlyphs" >Name</text>
<text x="156" y="153" font-size="6.1" fill="#eef1f4" stroke="#eef1f4" stroke-width="0.14" text-anchor="start" font-weight="normal" textLength="5.5" lengthAdjust="spacingAndGlyphs" >O.</text>
<text x="164.5" y="153" font-size="6.1" fill="#eef1f4" stroke="#eef1f4" stroke-width="0.14" text-anchor="start" font-weight="normal" textLength="6" lengthAdjust="spacingAndGlyphs" >F..</text>
<text x="175.5" y="153" font-size="6.1" fill="#eef1f4" stroke="#eef1f4" stroke-width="0.14" text-anchor="start" font-weight="normal" textLength="5" lengthAdjust="spacingAndGlyphs" >L..</text>
<text x="184.5" y="153" font-size="6.1" fill="#eef1f4" stroke="#eef1f4" stroke-width="0.14" text-anchor="start" font-weight="normal" textLength="6" lengthAdjust="spacingAndGlyphs" >P..</text>
<text x="193.5" y="153" font-size="6.1" fill="#eef1f4" stroke="#eef1f4" stroke-width="0.14" text-anchor="start" font-weight="normal" textLength="6.5" lengthAdjust="spacingAndGlyphs" >C..</text>
<text x="204" y="153" font-size="6.1" fill="#eef1f4" stroke="#eef1f4" stroke-width="0.14" text-anchor="start" font-weight="normal" textLength="25" lengthAdjust="spacingAndGlyphs" >Linetype</text>
<text x="244.3" y="153" font-size="6.1" fill="#eef1f4" stroke="#eef1f4" stroke-width="0.14" text-anchor="start" font-weight="normal" textLength="31" lengthAdjust="spacingAndGlyphs" >Lineweight</text>
<path d="M148.800 152l1.700-2.200 1.700 2.200z" fill="#dfe3e8"/>
<line x1="114.5" y1="147" x2="114.5" y2="155.5" stroke="#353e4a" stroke-width="0.6" />
<line x1="154.3" y1="147" x2="154.3" y2="155.5" stroke="#353e4a" stroke-width="0.6" />
<line x1="163" y1="147" x2="163" y2="155.5" stroke="#353e4a" stroke-width="0.6" />
<line x1="173.5" y1="147" x2="173.5" y2="155.5" stroke="#353e4a" stroke-width="0.6" />
<line x1="183" y1="147" x2="183" y2="155.5" stroke="#353e4a" stroke-width="0.6" />
<line x1="192" y1="147" x2="192" y2="155.5" stroke="#353e4a" stroke-width="0.6" />
<line x1="202.5" y1="147" x2="202.5" y2="155.5" stroke="#353e4a" stroke-width="0.6" />
<line x1="242" y1="147" x2="242" y2="155.5" stroke="#353e4a" stroke-width="0.6" />
<line x1="154.3" y1="155.5" x2="154.3" y2="272" stroke="#2f3742" stroke-width="0.8" />
<rect x="282.8" y="148" width="2" height="7.5" fill="#6b7686" />
<path d="M105.800 162.7l2-3h5l-2 3z" fill="#6fbdea"/>
<text x="116.2" y="163.5" font-size="6.2" fill="#f2f4f6" stroke="#f2f4f6" stroke-width="0.14" text-anchor="start" font-weight="normal" textLength="33" lengthAdjust="spacingAndGlyphs" >@SECTIO...</text>
<circle cx="157.7" cy="160.435" r="2.125" fill="#f5d25e"/><path d="M156.595 161.88h2.21v1.02h-2.21z" fill="#f5d25e"/><rect x="156.85" y="162.89999999999998" width="1.7" height="1.53" fill="#e8ebef"/>
<text x="167.8" y="163.79999999999998" font-size="7.5" fill="#3fd0d8" stroke="#3fd0d8" stroke-width="0.14" text-anchor="middle" font-weight="normal" style="font-family:&quot;DejaVu Sans&quot;,sans-serif" >✻</text>
<rect x="174.59" y="161.245" width="4.42" height="3.23" fill="#f0c040"/><path d="M176.63000000000002 161.245v-1.36a1.4449999999999998 1.4449999999999998 0 0 1 2.8899999999999997 0v0.425" stroke="#f0c040" stroke-width="0.85" fill="none"/><rect x="176.29000000000002" y="162.265" width="1.02" height="1.275" fill="#6b5310"/>
<rect x="184" y="159.89999999999998" width="6.400" height="3.300" rx="0.700" fill="#e8ebef"/><rect x="185.300" y="157.89999999999998" width="3.800" height="2.300" fill="#e8ebef"/><rect x="185.300" y="162.2" width="3.800" height="2.300" fill="#ffffff" stroke="#8d96a3" stroke-width="0.400"/>
<rect x="194" y="158.1" width="6.700" height="6.300" fill="#ffffff" stroke="#c9ced6" stroke-width="0.500"/>
<text x="204" y="163.5" font-size="6.2" fill="#f2f4f6" stroke="#f2f4f6" stroke-width="0.14" text-anchor="start" font-weight="normal" textLength="33" lengthAdjust="spacingAndGlyphs" >Continuous</text>
<line x1="243" y1="161.5" x2="254" y2="161.5" stroke="#dfe3e8" stroke-width="0.9" opacity="1"/>
<text x="258" y="163.5" font-size="6.2" fill="#f2f4f6" stroke="#f2f4f6" stroke-width="0.14" text-anchor="start" font-weight="normal" textLength="16.5" lengthAdjust="spacingAndGlyphs" >Defa...</text>
<rect x="104.6" y="166.01999999999998" width="49.5" height="9.6" fill="#5b6c86" />
<rect x="154.6" y="166.01999999999998" width="124.5" height="9.6" fill="#7383a0" />
<path d="M105.800 172.32l2-3h5l-2 3z" fill="#6fbdea"/>
<text x="116.2" y="173.12" font-size="6.2" fill="#f2f4f6" stroke="#f2f4f6" stroke-width="0.14" text-anchor="start" font-weight="normal" textLength="3.5" lengthAdjust="spacingAndGlyphs" >0</text>
<circle cx="157.7" cy="170.055" r="2.125" fill="#f5d25e"/><path d="M156.595 171.5h2.21v1.02h-2.21z" fill="#f5d25e"/><rect x="156.85" y="172.51999999999998" width="1.7" height="1.53" fill="#e8ebef"/>
<circle cx="167.8" cy="170.82" r="1.615" fill="#f5c840"/>
<path d="M169.93 170.82L171.03 170.82M169.30 172.32L170.08 173.10M167.80 172.94L167.80 174.05M166.30 172.32L165.52 173.10M165.68 170.82L164.57 170.82M166.30 169.32L165.52 168.54M167.80 168.69L167.80 167.59M169.30 169.32L170.08 168.54" stroke="#f5c840" stroke-width="0.765"/>
<rect x="174.59" y="170.865" width="4.42" height="3.23" fill="#f0c040"/><path d="M176.63000000000002 170.865v-1.36a1.4449999999999998 1.4449999999999998 0 0 1 2.8899999999999997 0v0.425" stroke="#f0c040" stroke-width="0.85" fill="none"/><rect x="176.29000000000002" y="171.885" width="1.02" height="1.275" fill="#6b5310"/>
<rect x="184" y="169.51999999999998" width="6.400" height="3.300" rx="0.700" fill="#e8ebef"/><rect x="185.300" y="167.51999999999998" width="3.800" height="2.300" fill="#e8ebef"/><rect x="185.300" y="171.82" width="3.800" height="2.300" fill="#ffffff" stroke="#8d96a3" stroke-width="0.400"/>
<rect x="194" y="167.72" width="6.700" height="6.300" fill="#ffffff" stroke="#c9ced6" stroke-width="0.500"/>
<text x="204" y="173.12" font-size="6.2" fill="#f2f4f6" stroke="#f2f4f6" stroke-width="0.14" text-anchor="start" font-weight="normal" textLength="33" lengthAdjust="spacingAndGlyphs" >Continuous</text>
<line x1="243" y1="170.5" x2="254" y2="170.5" stroke="#dfe3e8" stroke-width="0.9" opacity="1"/>
<text x="258" y="173.12" font-size="6.2" fill="#f2f4f6" stroke="#f2f4f6" stroke-width="0.14" text-anchor="start" font-weight="normal" textLength="16.5" lengthAdjust="spacingAndGlyphs" >Defa...</text>
<path d="M105.800 181.94l2-3h5l-2 3z" fill="#6fbdea"/>
<text x="116.2" y="182.74" font-size="6.2" fill="#f2f4f6" stroke="#f2f4f6" stroke-width="0.14" text-anchor="start" font-weight="normal" textLength="30" lengthAdjust="spacingAndGlyphs" >2-LINIE05</text>
<circle cx="157.7" cy="179.675" r="2.125" fill="#f5d25e"/><path d="M156.595 181.12h2.21v1.02h-2.21z" fill="#f5d25e"/><rect x="156.85" y="182.14" width="1.7" height="1.53" fill="#e8ebef"/>
<circle cx="167.8" cy="180.44" r="1.615" fill="#f5c840"/>
<path d="M169.93 180.44L171.03 180.44M169.30 181.94L170.08 182.72M167.80 182.56L167.80 183.67M166.30 181.94L165.52 182.72M165.68 180.44L164.57 180.44M166.30 178.94L165.52 178.16M167.80 178.31L167.80 177.21M169.30 178.94L170.08 178.16" stroke="#f5c840" stroke-width="0.765"/>
<rect x="174.59" y="180.485" width="4.42" height="3.23" fill="#f0c040"/><path d="M176.63000000000002 180.485v-1.36a1.4449999999999998 1.4449999999999998 0 0 1 2.8899999999999997 0v0.425" stroke="#f0c040" stroke-width="0.85" fill="none"/><rect x="176.29000000000002" y="181.505" width="1.02" height="1.275" fill="#6b5310"/>
<rect x="184" y="179.14" width="6.400" height="3.300" rx="0.700" fill="#e8ebef"/><rect x="185.300" y="177.14" width="3.800" height="2.300" fill="#e8ebef"/><rect x="185.300" y="181.44" width="3.800" height="2.300" fill="#ffffff" stroke="#8d96a3" stroke-width="0.400"/>
<rect x="194" y="177.34" width="6.700" height="6.300" fill="#e81212" stroke="#c9ced6" stroke-width="0.500"/>
<text x="204" y="182.74" font-size="6.2" fill="#f2f4f6" stroke="#f2f4f6" stroke-width="0.14" text-anchor="start" font-weight="normal" textLength="33" lengthAdjust="spacingAndGlyphs" >Continuous</text>
<line x1="243" y1="180.5" x2="254" y2="180.5" stroke="#dfe3e8" stroke-width="0.9" opacity="0.35"/>
<text x="258" y="182.74" font-size="6.2" fill="#f2f4f6" stroke="#f2f4f6" stroke-width="0.14" text-anchor="start" font-weight="normal" textLength="16.5" lengthAdjust="spacingAndGlyphs" >0.25...</text>
<path d="M105.800 191.56l2-3h5l-2 3z" fill="#6fbdea"/>
<text x="116.2" y="192.36" font-size="6.2" fill="#f2f4f6" stroke="#f2f4f6" stroke-width="0.14" text-anchor="start" font-weight="normal" textLength="33.5" lengthAdjust="spacingAndGlyphs" >2-LINIE025</text>
<circle cx="157.7" cy="189.29500000000002" r="2.125" fill="#f5d25e"/><path d="M156.595 190.74h2.21v1.02h-2.21z" fill="#f5d25e"/><rect x="156.85" y="191.76" width="1.7" height="1.53" fill="#e8ebef"/>
<circle cx="167.8" cy="190.06" r="1.615" fill="#f5c840"/>
<path d="M169.93 190.06L171.03 190.06M169.30 191.56L170.08 192.34M167.80 192.19L167.80 193.29M166.30 191.56L165.52 192.34M165.68 190.06L164.57 190.06M166.30 188.56L165.52 187.78M167.80 187.94L167.80 186.83M169.30 188.56L170.08 187.78" stroke="#f5c840" stroke-width="0.765"/>
<rect x="174.59" y="190.10500000000002" width="4.42" height="3.23" fill="#f0c040"/><path d="M176.63000000000002 190.10500000000002v-1.36a1.4449999999999998 1.4449999999999998 0 0 1 2.8899999999999997 0v0.425" stroke="#f0c040" stroke-width="0.85" fill="none"/><rect x="176.29000000000002" y="191.125" width="1.02" height="1.275" fill="#6b5310"/>
<rect x="184" y="188.76" width="6.400" height="3.300" rx="0.700" fill="#e8ebef"/><rect x="185.300" y="186.76" width="3.800" height="2.300" fill="#e8ebef"/><rect x="185.300" y="191.06" width="3.800" height="2.300" fill="#ffffff" stroke="#8d96a3" stroke-width="0.400"/>
<rect x="194" y="186.96" width="6.700" height="6.300" fill="#8a0a0a" stroke="#c9ced6" stroke-width="0.500"/>
<text x="204" y="192.36" font-size="6.2" fill="#f2f4f6" stroke="#f2f4f6" stroke-width="0.14" text-anchor="start" font-weight="normal" textLength="33" lengthAdjust="spacingAndGlyphs" >Continuous</text>
<line x1="243" y1="190.5" x2="254" y2="190.5" stroke="#dfe3e8" stroke-width="0.9" opacity="1"/>
<text x="258" y="192.36" font-size="6.2" fill="#f2f4f6" stroke="#f2f4f6" stroke-width="0.14" text-anchor="start" font-weight="normal" textLength="16.5" lengthAdjust="spacingAndGlyphs" >0.13...</text>
<path d="M105.800 201.17999999999998l2-3h5l-2 3z" fill="#6fbdea"/>
<text x="116.2" y="201.98" font-size="6.2" fill="#f2f4f6" stroke="#f2f4f6" stroke-width="0.14" text-anchor="start" font-weight="normal" textLength="34" lengthAdjust="spacingAndGlyphs" >2-MÖBEL-...</text>
<circle cx="157.7" cy="198.915" r="2.125" fill="#f5d25e"/><path d="M156.595 200.35999999999999h2.21v1.02h-2.21z" fill="#f5d25e"/><rect x="156.85" y="201.37999999999997" width="1.7" height="1.53" fill="#e8ebef"/>
<circle cx="167.8" cy="199.67999999999998" r="1.615" fill="#f5c840"/>
<path d="M169.93 199.68L171.03 199.68M169.30 201.18L170.08 201.96M167.80 201.80L167.80 202.91M166.30 201.18L165.52 201.96M165.68 199.68L164.57 199.68M166.30 198.18L165.52 197.40M167.80 197.55L167.80 196.45M169.30 198.18L170.08 197.40" stroke="#f5c840" stroke-width="0.765"/>
<rect x="174.59" y="199.725" width="4.42" height="3.23" fill="#f0c040"/><path d="M176.63000000000002 199.725v-1.36a1.4449999999999998 1.4449999999999998 0 0 1 2.8899999999999997 0v0.425" stroke="#f0c040" stroke-width="0.85" fill="none"/><rect x="176.29000000000002" y="200.74499999999998" width="1.02" height="1.275" fill="#6b5310"/>
<rect x="184" y="198.37999999999997" width="6.400" height="3.300" rx="0.700" fill="#e8ebef"/><rect x="185.300" y="196.37999999999997" width="3.800" height="2.300" fill="#e8ebef"/><rect x="185.300" y="200.67999999999998" width="3.800" height="2.300" fill="#ffffff" stroke="#8d96a3" stroke-width="0.400"/>
<rect x="194" y="196.57999999999998" width="6.700" height="6.300" fill="#2b2b48" stroke="#c9ced6" stroke-width="0.500"/>
<text x="204" y="201.98" font-size="6.2" fill="#f2f4f6" stroke="#f2f4f6" stroke-width="0.14" text-anchor="start" font-weight="normal" textLength="33.5" lengthAdjust="spacingAndGlyphs" >GESTRICH...</text>
<line x1="243" y1="199.5" x2="254" y2="199.5" stroke="#dfe3e8" stroke-width="0.9" opacity="0.8"/>
<text x="258" y="201.98" font-size="6.2" fill="#f2f4f6" stroke="#f2f4f6" stroke-width="0.14" text-anchor="start" font-weight="normal" textLength="16.5" lengthAdjust="spacingAndGlyphs" >Defa...</text>
<path d="M105.800 210.79999999999998l2-3h5l-2 3z" fill="#6fbdea"/>
<text x="116.2" y="211.6" font-size="6.2" fill="#f2f4f6" stroke="#f2f4f6" stroke-width="0.14" text-anchor="start" font-weight="normal" textLength="33" lengthAdjust="spacingAndGlyphs" >2D_Annot...</text>
<circle cx="157.7" cy="208.535" r="2.125" fill="#f5d25e"/><path d="M156.595 209.98h2.21v1.02h-2.21z" fill="#f5d25e"/><rect x="156.85" y="210.99999999999997" width="1.7" height="1.53" fill="#e8ebef"/>
<circle cx="167.8" cy="209.29999999999998" r="1.615" fill="#f5c840"/>
<path d="M169.93 209.30L171.03 209.30M169.30 210.80L170.08 211.58M167.80 211.42L167.80 212.53M166.30 210.80L165.52 211.58M165.68 209.30L164.57 209.30M166.30 207.80L165.52 207.02M167.80 207.17L167.80 206.07M169.30 207.80L170.08 207.02" stroke="#f5c840" stroke-width="0.765"/>
<rect x="174.59" y="209.345" width="4.42" height="3.23" fill="#f0c040"/><path d="M176.63000000000002 209.345v-1.36a1.4449999999999998 1.4449999999999998 0 0 1 2.8899999999999997 0v0.425" stroke="#f0c040" stroke-width="0.85" fill="none"/><rect x="176.29000000000002" y="210.36499999999998" width="1.02" height="1.275" fill="#6b5310"/>
<rect x="184" y="207.99999999999997" width="6.400" height="3.300" rx="0.700" fill="#e8ebef"/><rect x="185.300" y="205.99999999999997" width="3.800" height="2.300" fill="#e8ebef"/><rect x="185.300" y="210.29999999999998" width="3.800" height="2.300" fill="#ffffff" stroke="#8d96a3" stroke-width="0.400"/>
<rect x="194" y="206.2" width="6.700" height="6.300" fill="#ea1070" stroke="#c9ced6" stroke-width="0.500"/>
<text x="204" y="211.6" font-size="6.2" fill="#f2f4f6" stroke="#f2f4f6" stroke-width="0.14" text-anchor="start" font-weight="normal" textLength="33" lengthAdjust="spacingAndGlyphs" >Continuous</text>
<line x1="243" y1="209.5" x2="254" y2="209.5" stroke="#dfe3e8" stroke-width="0.9" opacity="0.8"/>
<text x="258" y="211.6" font-size="6.2" fill="#f2f4f6" stroke="#f2f4f6" stroke-width="0.14" text-anchor="start" font-weight="normal" textLength="16.5" lengthAdjust="spacingAndGlyphs" >0.00...</text>
<path d="M105.800 220.42l2-3h5l-2 3z" fill="#6fbdea"/>
<text x="116.2" y="221.22" font-size="6.2" fill="#f2f4f6" stroke="#f2f4f6" stroke-width="0.14" text-anchor="start" font-weight="normal" textLength="34.5" lengthAdjust="spacingAndGlyphs" >2D_Bifold_...</text>
<circle cx="157.7" cy="218.155" r="2.125" fill="#f5d25e"/><path d="M156.595 219.6h2.21v1.02h-2.21z" fill="#f5d25e"/><rect x="156.85" y="220.61999999999998" width="1.7" height="1.53" fill="#e8ebef"/>
<circle cx="167.8" cy="218.92" r="1.615" fill="#f5c840"/>
<path d="M169.93 218.92L171.03 218.92M169.30 220.42L170.08 221.20M167.80 221.04L167.80 222.15M166.30 220.42L165.52 221.20M165.68 218.92L164.57 218.92M166.30 217.42L165.52 216.64M167.80 216.79L167.80 215.69M169.30 217.42L170.08 216.64" stroke="#f5c840" stroke-width="0.765"/>
<rect x="174.59" y="218.965" width="4.42" height="3.23" fill="#f0c040"/><path d="M176.63000000000002 218.965v-1.36a1.4449999999999998 1.4449999999999998 0 0 1 2.8899999999999997 0v0.425" stroke="#f0c040" stroke-width="0.85" fill="none"/><rect x="176.29000000000002" y="219.98499999999999" width="1.02" height="1.275" fill="#6b5310"/>
<rect x="184" y="217.61999999999998" width="6.400" height="3.300" rx="0.700" fill="#e8ebef"/><rect x="185.300" y="215.61999999999998" width="3.800" height="2.300" fill="#e8ebef"/><rect x="185.300" y="219.92" width="3.800" height="2.300" fill="#ffffff" stroke="#8d96a3" stroke-width="0.400"/>
<rect x="194" y="215.82" width="6.700" height="6.300" fill="#1fa574" stroke="#c9ced6" stroke-width="0.500"/>
<text x="204" y="221.22" font-size="6.2" fill="#f2f4f6" stroke="#f2f4f6" stroke-width="0.14" text-anchor="start" font-weight="normal" textLength="33" lengthAdjust="spacingAndGlyphs" >Continuous</text>
<line x1="243" y1="218.5" x2="254" y2="218.5" stroke="#dfe3e8" stroke-width="0.9" opacity="1"/>
<text x="258" y="221.22" font-size="6.2" fill="#f2f4f6" stroke="#f2f4f6" stroke-width="0.14" text-anchor="start" font-weight="normal" textLength="16.5" lengthAdjust="spacingAndGlyphs" >Defa...</text>
<path d="M105.800 230.03999999999996l2-3h5l-2 3z" fill="#6fbdea"/>
<text x="116.2" y="230.83999999999997" font-size="6.2" fill="#f2f4f6" stroke="#f2f4f6" stroke-width="0.14" text-anchor="start" font-weight="normal" textLength="34.5" lengthAdjust="spacingAndGlyphs" >2D_Bifold_...</text>
<circle cx="157.7" cy="227.77499999999998" r="2.125" fill="#f5d25e"/><path d="M156.595 229.21999999999997h2.21v1.02h-2.21z" fill="#f5d25e"/><rect x="156.85" y="230.23999999999995" width="1.7" height="1.53" fill="#e8ebef"/>
<circle cx="167.8" cy="228.53999999999996" r="1.615" fill="#f5c840"/>
<path d="M169.93 228.54L171.03 228.54M169.30 230.04L170.08 230.82M167.80 230.66L167.80 231.77M166.30 230.04L165.52 230.82M165.68 228.54L164.57 228.54M166.30 227.04L165.52 226.26M167.80 226.41L167.80 225.31M169.30 227.04L170.08 226.26" stroke="#f5c840" stroke-width="0.765"/>
<rect x="174.59" y="228.58499999999998" width="4.42" height="3.23" fill="#f0c040"/><path d="M176.63000000000002 228.58499999999998v-1.36a1.4449999999999998 1.4449999999999998 0 0 1 2.8899999999999997 0v0.425" stroke="#f0c040" stroke-width="0.85" fill="none"/><rect x="176.29000000000002" y="229.60499999999996" width="1.02" height="1.275" fill="#6b5310"/>
<rect x="184" y="227.23999999999995" width="6.400" height="3.300" rx="0.700" fill="#e8ebef"/><rect x="185.300" y="225.23999999999995" width="3.800" height="2.300" fill="#e8ebef"/><rect x="185.300" y="229.53999999999996" width="3.800" height="2.300" fill="#ffffff" stroke="#8d96a3" stroke-width="0.400"/>
<rect x="194" y="225.43999999999997" width="6.700" height="6.300" fill="#c4ccd6" stroke="#c9ced6" stroke-width="0.500"/>
<text x="204" y="230.83999999999997" font-size="6.2" fill="#f2f4f6" stroke="#f2f4f6" stroke-width="0.14" text-anchor="start" font-weight="normal" textLength="33" lengthAdjust="spacingAndGlyphs" >Continuous</text>
<line x1="243" y1="228.5" x2="254" y2="228.5" stroke="#dfe3e8" stroke-width="0.9" opacity="0.35"/>
<text x="258" y="230.83999999999997" font-size="6.2" fill="#f2f4f6" stroke="#f2f4f6" stroke-width="0.14" text-anchor="start" font-weight="normal" textLength="16.5" lengthAdjust="spacingAndGlyphs" >Defa...</text>
<path d="M105.800 239.65999999999997l2-3h5l-2 3z" fill="#6fbdea"/>
<text x="116.2" y="240.45999999999998" font-size="6.2" fill="#f2f4f6" stroke="#f2f4f6" stroke-width="0.14" text-anchor="start" font-weight="normal" textLength="34.5" lengthAdjust="spacingAndGlyphs" >2D_Bifold_...</text>
<circle cx="157.7" cy="237.39499999999998" r="2.125" fill="#f5d25e"/><path d="M156.595 238.83999999999997h2.21v1.02h-2.21z" fill="#f5d25e"/><rect x="156.85" y="239.85999999999996" width="1.7" height="1.53" fill="#e8ebef"/>
<circle cx="167.8" cy="238.15999999999997" r="1.615" fill="#f5c840"/>
<path d="M169.93 238.16L171.03 238.16M169.30 239.66L170.08 240.44M167.80 240.28L167.80 241.39M166.30 239.66L165.52 240.44M165.68 238.16L164.57 238.16M166.30 236.66L165.52 235.88M167.80 236.03L167.80 234.93M169.30 236.66L170.08 235.88" stroke="#f5c840" stroke-width="0.765"/>
<rect x="174.59" y="238.20499999999998" width="4.42" height="3.23" fill="#f0c040"/><path d="M176.63000000000002 238.20499999999998v-1.36a1.4449999999999998 1.4449999999999998 0 0 1 2.8899999999999997 0v0.425" stroke="#f0c040" stroke-width="0.85" fill="none"/><rect x="176.29000000000002" y="239.22499999999997" width="1.02" height="1.275" fill="#6b5310"/>
<rect x="184" y="236.85999999999996" width="6.400" height="3.300" rx="0.700" fill="#e8ebef"/><rect x="185.300" y="234.85999999999996" width="3.800" height="2.300" fill="#e8ebef"/><rect x="185.300" y="239.15999999999997" width="3.800" height="2.300" fill="#ffffff" stroke="#8d96a3" stroke-width="0.400"/>
<rect x="194" y="235.05999999999997" width="6.700" height="6.300" fill="#0c0c0c" stroke="#c9ced6" stroke-width="0.500"/>
<text x="204" y="240.45999999999998" font-size="6.2" fill="#f2f4f6" stroke="#f2f4f6" stroke-width="0.14" text-anchor="start" font-weight="normal" textLength="33" lengthAdjust="spacingAndGlyphs" >Continuous</text>
<line x1="243" y1="238.5" x2="254" y2="238.5" stroke="#dfe3e8" stroke-width="0.9" opacity="1"/>
<text x="258" y="240.45999999999998" font-size="6.2" fill="#f2f4f6" stroke="#f2f4f6" stroke-width="0.14" text-anchor="start" font-weight="normal" textLength="16.5" lengthAdjust="spacingAndGlyphs" >Defa...</text>
<path d="M105.800 249.27999999999997l2-3h5l-2 3z" fill="#6fbdea"/>
<text x="116.2" y="250.07999999999998" font-size="6.2" fill="#f2f4f6" stroke="#f2f4f6" stroke-width="0.14" text-anchor="start" font-weight="normal" textLength="34.5" lengthAdjust="spacingAndGlyphs" >2D_Bifold_...</text>
<circle cx="157.7" cy="247.015" r="2.125" fill="#f5d25e"/><path d="M156.595 248.45999999999998h2.21v1.02h-2.21z" fill="#f5d25e"/><rect x="156.85" y="249.47999999999996" width="1.7" height="1.53" fill="#e8ebef"/>
<circle cx="167.8" cy="247.77999999999997" r="1.615" fill="#f5c840"/>
<path d="M169.93 247.78L171.03 247.78M169.30 249.28L170.08 250.06M167.80 249.90L167.80 251.01M166.30 249.28L165.52 250.06M165.68 247.78L164.57 247.78M166.30 246.28L165.52 245.50M167.80 245.65L167.80 244.55M169.30 246.28L170.08 245.50" stroke="#f5c840" stroke-width="0.765"/>
<rect x="174.59" y="247.825" width="4.42" height="3.23" fill="#f0c040"/><path d="M176.63000000000002 247.825v-1.36a1.4449999999999998 1.4449999999999998 0 0 1 2.8899999999999997 0v0.425" stroke="#f0c040" stroke-width="0.85" fill="none"/><rect x="176.29000000000002" y="248.84499999999997" width="1.02" height="1.275" fill="#6b5310"/>
<rect x="184" y="246.47999999999996" width="6.400" height="3.300" rx="0.700" fill="#e8ebef"/><rect x="185.300" y="244.47999999999996" width="3.800" height="2.300" fill="#e8ebef"/><rect x="185.300" y="248.77999999999997" width="3.800" height="2.300" fill="#ffffff" stroke="#8d96a3" stroke-width="0.400"/>
<rect x="194" y="244.67999999999998" width="6.700" height="6.300" fill="#6886a6" stroke="#c9ced6" stroke-width="0.500"/>
<text x="204" y="250.07999999999998" font-size="6.2" fill="#f2f4f6" stroke="#f2f4f6" stroke-width="0.14" text-anchor="start" font-weight="normal" textLength="33" lengthAdjust="spacingAndGlyphs" >Continuous</text>
<line x1="243" y1="247.5" x2="254" y2="247.5" stroke="#dfe3e8" stroke-width="0.9" opacity="1"/>
<text x="258" y="250.07999999999998" font-size="6.2" fill="#f2f4f6" stroke="#f2f4f6" stroke-width="0.14" text-anchor="start" font-weight="normal" textLength="16.5" lengthAdjust="spacingAndGlyphs" >Defa...</text>
<path d="M105.800 258.9l2-3h5l-2 3z" fill="#6fbdea"/>
<text x="116.2" y="259.7" font-size="6.2" fill="#f2f4f6" stroke="#f2f4f6" stroke-width="0.14" text-anchor="start" font-weight="normal" textLength="33" lengthAdjust="spacingAndGlyphs" >2D_Claddi...</text>
<circle cx="157.7" cy="256.635" r="2.125" fill="#f5d25e"/><path d="M156.595 258.08h2.21v1.02h-2.21z" fill="#f5d25e"/><rect x="156.85" y="259.09999999999997" width="1.7" height="1.53" fill="#e8ebef"/>
<circle cx="167.8" cy="257.4" r="1.615" fill="#f5c840"/>
<path d="M169.93 257.40L171.03 257.40M169.30 258.90L170.08 259.68M167.80 259.52L167.80 260.63M166.30 258.90L165.52 259.68M165.68 257.40L164.57 257.40M166.30 255.90L165.52 255.12M167.80 255.27L167.80 254.17M169.30 255.90L170.08 255.12" stroke="#f5c840" stroke-width="0.765"/>
<rect x="174.59" y="257.445" width="4.42" height="3.23" fill="#f0c040"/><path d="M176.63000000000002 257.445v-1.36a1.4449999999999998 1.4449999999999998 0 0 1 2.8899999999999997 0v0.425" stroke="#f0c040" stroke-width="0.85" fill="none"/><rect x="176.29000000000002" y="258.465" width="1.02" height="1.275" fill="#6b5310"/>
<rect x="184" y="256.09999999999997" width="6.400" height="3.300" rx="0.700" fill="#e8ebef"/><rect x="185.300" y="254.09999999999997" width="3.800" height="2.300" fill="#e8ebef"/><rect x="185.300" y="258.4" width="3.800" height="2.300" fill="#ffffff" stroke="#8d96a3" stroke-width="0.400"/>
<rect x="194" y="254.29999999999998" width="6.700" height="6.300" fill="#d8d8d8" stroke="#c9ced6" stroke-width="0.500"/>
<text x="204" y="259.7" font-size="6.2" fill="#f2f4f6" stroke="#f2f4f6" stroke-width="0.14" text-anchor="start" font-weight="normal" textLength="33" lengthAdjust="spacingAndGlyphs" >Continuous</text>
<line x1="243" y1="257.5" x2="254" y2="257.5" stroke="#dfe3e8" stroke-width="0.9" opacity="1"/>
<text x="258" y="259.7" font-size="6.2" fill="#f2f4f6" stroke="#f2f4f6" stroke-width="0.14" text-anchor="start" font-weight="normal" textLength="16.5" lengthAdjust="spacingAndGlyphs" >Defa...</text>
<path d="M105.800 268.52l2-3h5l-2 3z" fill="#6fbdea"/>
<text x="116.2" y="269.32" font-size="6.2" fill="#f2f4f6" stroke="#f2f4f6" stroke-width="0.14" text-anchor="start" font-weight="normal" textLength="33" lengthAdjust="spacingAndGlyphs" >2D_Claddi...</text>
<circle cx="157.7" cy="266.255" r="2.125" fill="#f5d25e"/><path d="M156.595 267.7h2.21v1.02h-2.21z" fill="#f5d25e"/><rect x="156.85" y="268.71999999999997" width="1.7" height="1.53" fill="#e8ebef"/>
<circle cx="167.8" cy="267.02" r="1.615" fill="#f5c840"/>
<path d="M169.93 267.02L171.03 267.02M169.30 268.52L170.08 269.30M167.80 269.14L167.80 270.25M166.30 268.52L165.52 269.30M165.68 267.02L164.57 267.02M166.30 265.52L165.52 264.74M167.80 264.89L167.80 263.79M169.30 265.52L170.08 264.74" stroke="#f5c840" stroke-width="0.765"/>
<rect x="174.59" y="267.065" width="4.42" height="3.23" fill="#f0c040"/><path d="M176.63000000000002 267.065v-1.36a1.4449999999999998 1.4449999999999998 0 0 1 2.8899999999999997 0v0.425" stroke="#f0c040" stroke-width="0.85" fill="none"/><rect x="176.29000000000002" y="268.085" width="1.02" height="1.275" fill="#6b5310"/>
<rect x="184" y="265.71999999999997" width="6.400" height="3.300" rx="0.700" fill="#e8ebef"/><rect x="185.300" y="263.71999999999997" width="3.800" height="2.300" fill="#e8ebef"/><rect x="185.300" y="268.02" width="3.800" height="2.300" fill="#ffffff" stroke="#8d96a3" stroke-width="0.400"/>
<circle cx="189.3" cy="268.82" r="1.9" stroke="none" fill="#e03030" stroke-width="1" />
<line x1="188" y1="267.52" x2="190.6" y2="270.12" stroke="#fff" stroke-width="0.6" />
<rect x="194" y="263.91999999999996" width="6.700" height="6.300" fill="#b896a6" stroke="#c9ced6" stroke-width="0.500"/>
<text x="204" y="269.32" font-size="6.2" fill="#f2f4f6" stroke="#f2f4f6" stroke-width="0.14" text-anchor="start" font-weight="normal" textLength="33" lengthAdjust="spacingAndGlyphs" >Continuous</text>
<line x1="243" y1="267.5" x2="254" y2="267.5" stroke="#dfe3e8" stroke-width="0.9" opacity="1"/>
<text x="258" y="269.32" font-size="6.2" fill="#f2f4f6" stroke="#f2f4f6" stroke-width="0.14" text-anchor="start" font-weight="normal" textLength="16.5" lengthAdjust="spacingAndGlyphs" >Defa...</text>
<rect x="107" y="273.6" width="75" height="1.6" fill="#515b6a" />
</g>
<g id="toolpalette">
<rect x="765.5" y="122" width="10.5" height="301.5" fill="#2c343f" />
<rect x="775.5" y="120.5" width="77.8" height="316" fill="#3a4452" />
<rect x="853.3" y="120.5" width="11" height="316" fill="#2a323d" />
<path d="M857 122.700l4 4m0-4l-4 4" stroke="#eef1f4" stroke-width="1.200"/>
<path d="M857.300 132.500v4M858.500 133.300l3 1.200-3 1.200z" stroke="#dfe3e8" stroke-width="0.800" fill="#dfe3e8"/>
<circle cx="859" cy="145" r="1.8" stroke="#dfe3e8" fill="none" stroke-width="1.3" />
<path d="M856.200 145h5.600M859 142.200v5.600" stroke="#dfe3e8" stroke-width="0.700"/>
<text transform="translate(862.300,423) rotate(-90)" font-size="6" fill="#ccd2da" textLength="88.500" lengthAdjust="spacingAndGlyphs">TOOL PALETTES - ALL PALETTES</text>
<rect x="856" y="428.800" width="5.500" height="6" fill="#dfe3e8"/><path d="M857 430.800h3.500M857 432.800h3.500M858.800 429.800v4.500" stroke="#3a4452" stroke-width="0.500"/>
<rect x="848.3" y="127" width="2.2" height="267" fill="#566070" />
<line x1="766" y1="151.5" x2="776" y2="151.5" stroke="#3b4450" stroke-width="0.6" />
<text transform="translate(772.800,147.75) rotate(-90)" font-size="6" fill="#e0e4ea" textLength="23" lengthAdjust="spacingAndGlyphs">Annota...</text>
<line x1="766" y1="183" x2="776" y2="183" stroke="#3b4450" stroke-width="0.6" />
<text transform="translate(772.800,179.5) rotate(-90)" font-size="6" fill="#e0e4ea" textLength="24" lengthAdjust="spacingAndGlyphs">Archite...</text>
<line x1="766" y1="213" x2="776" y2="213" stroke="#3b4450" stroke-width="0.6" />
<text transform="translate(772.800,209.0) rotate(-90)" font-size="6" fill="#e0e4ea" textLength="22" lengthAdjust="spacingAndGlyphs">Mecha...</text>
<line x1="766" y1="243" x2="776" y2="243" stroke="#3b4450" stroke-width="0.6" />
<text transform="translate(772.800,240.0) rotate(-90)" font-size="6" fill="#e0e4ea" textLength="24.5" lengthAdjust="spacingAndGlyphs">Electrical</text>
<line x1="766" y1="273" x2="776" y2="273" stroke="#3b4450" stroke-width="0.6" />
<text transform="translate(772.800,264.75) rotate(-90)" font-size="6" fill="#e0e4ea" textLength="11.5" lengthAdjust="spacingAndGlyphs">Civil</text>
<rect x="765.5" y="274" width="10.5" height="29" fill="#3a4452" />
<text transform="translate(772.800,300.0) rotate(-90)" font-size="6" fill="#e0e4ea" textLength="23" lengthAdjust="spacingAndGlyphs">Structu...</text>
<line x1="766" y1="335" x2="776" y2="335" stroke="#3b4450" stroke-width="0.6" />
<text transform="translate(772.800,331.0) rotate(-90)" font-size="6" fill="#e0e4ea" textLength="23.5" lengthAdjust="spacingAndGlyphs">Hatche...</text>
<line x1="766" y1="362" x2="776" y2="362" stroke="#3b4450" stroke-width="0.6" />
<text transform="translate(772.800,357.0) rotate(-90)" font-size="6" fill="#e0e4ea" textLength="16" lengthAdjust="spacingAndGlyphs">Tables</text>
<line x1="766" y1="395" x2="776" y2="395" stroke="#3b4450" stroke-width="0.6" />
<text transform="translate(772.800,390.5) rotate(-90)" font-size="6" fill="#e0e4ea" textLength="25" lengthAdjust="spacingAndGlyphs">Comma...</text>
<line x1="766" y1="425" x2="776" y2="425" stroke="#3b4450" stroke-width="0.6" />
<text transform="translate(772.800,420.5) rotate(-90)" font-size="6" fill="#e0e4ea" textLength="21" lengthAdjust="spacingAndGlyphs">Leaders</text>
<text x="779.5" y="135" font-size="5.9" fill="#cfd5dd" stroke="#cfd5dd" stroke-width="0.14" text-anchor="start" font-weight="normal" textLength="46" lengthAdjust="spacingAndGlyphs" >Imperial samples</text>
<text x="779.5" y="310.5" font-size="5.9" fill="#cfd5dd" stroke="#cfd5dd" stroke-width="0.14" text-anchor="start" font-weight="normal" textLength="41.5" lengthAdjust="spacingAndGlyphs" >Metric samples</text>
<path d="M782 146.1h15.500M782 160.1h11" stroke="#e8ebef" stroke-width="1.100" fill="none"/><path d="M788.7 146.6v13M791 146.6v13" stroke="#e8ebef" stroke-width="0.700"/>
<path d="M796.5 154.1l-4 4.300h2.500l-2 3.700 5.500-5h-2.800l2.300-3z" fill="#f8c432" stroke="#fff0c0" stroke-width="0.300"/>
<text x="801.5" y="151.9" font-size="5.9" fill="#eef1f4" stroke="#eef1f4" stroke-width="0.14" text-anchor="start" font-weight="normal" textLength="28" lengthAdjust="spacingAndGlyphs" >WF Beam -</text>
<text x="801.5" y="160.6" font-size="5.9" fill="#eef1f4" stroke="#eef1f4" stroke-width="0.14" text-anchor="start" font-weight="normal" textLength="24" lengthAdjust="spacingAndGlyphs" >Imperial</text>
<path d="M785 168.3h9M785 182.3h7" stroke="#e8ebef" stroke-width="1.100" fill="none"/><path d="M788.3 168.8v13M790.7 168.8v13" stroke="#e8ebef" stroke-width="0.700"/>
<path d="M796.5 176.3l-4 4.300h2.500l-2 3.700 5.500-5h-2.800l2.300-3z" fill="#f8c432" stroke="#fff0c0" stroke-width="0.300"/>
<text x="801.5" y="174.10000000000002" font-size="5.9" fill="#eef1f4" stroke="#eef1f4" stroke-width="0.14" text-anchor="start" font-weight="normal" textLength="22.5" lengthAdjust="spacingAndGlyphs" >I Beam -</text>
<text x="801.5" y="182.8" font-size="5.9" fill="#eef1f4" stroke="#eef1f4" stroke-width="0.14" text-anchor="start" font-weight="normal" textLength="24" lengthAdjust="spacingAndGlyphs" >Imperial</text>
<path d="M782 190.3v17l17-8.500z" fill="#e8ebef"/>
<text x="801.5" y="196.60000000000002" font-size="5.9" fill="#eef1f4" stroke="#eef1f4" stroke-width="0.14" text-anchor="start" font-weight="normal" textLength="24.5" lengthAdjust="spacingAndGlyphs" >Moment</text>
<text x="801.5" y="205.3" font-size="5.9" fill="#eef1f4" stroke="#eef1f4" stroke-width="0.14" text-anchor="start" font-weight="normal" textLength="38" lengthAdjust="spacingAndGlyphs" >Connection...</text>
<path d="M782 217.0h17.500M782 225.39999999999998h17.500" stroke="#c4cad3" stroke-width="0.800"/>
<text x="801.5" y="219.0" font-size="5.9" fill="#eef1f4" stroke="#eef1f4" stroke-width="0.14" text-anchor="start" font-weight="normal" textLength="20" lengthAdjust="spacingAndGlyphs" >Splice -</text>
<text x="801.5" y="227.7" font-size="5.9" fill="#eef1f4" stroke="#eef1f4" stroke-width="0.14" text-anchor="start" font-weight="normal" textLength="24" lengthAdjust="spacingAndGlyphs" >Imperial</text>
<circle cx="790" cy="243.7" r="5.300" fill="none" stroke="#e8ebef" stroke-width="1"/><path d="M790 243.7v-5.300a5.300 5.300 0 0 0 -5.300 5.300zM790 243.7v5.300a5.300 5.300 0 0 0 5.300-5.300z" fill="#e8ebef"/><path d="M790 236.2v15M782.5 243.7h15" stroke="#e8ebef" stroke-width="0.700"/>
<text x="801.5" y="241.5" font-size="5.9" fill="#eef1f4" stroke="#eef1f4" stroke-width="0.14" text-anchor="start" font-weight="normal" textLength="26" lengthAdjust="spacingAndGlyphs" >Elevation</text>
<text x="801.5" y="250.2" font-size="5.9" fill="#eef1f4" stroke="#eef1f4" stroke-width="0.14" text-anchor="start" font-weight="normal" textLength="39.5" lengthAdjust="spacingAndGlyphs" >symbol - Im...</text>
<path d="M782 263h8v3.500h9" stroke="#e8ebef" stroke-width="0.900" fill="none"/><path d="M782 264.5l1.500-1.500M784 264.5l1.500-1.500M786 264.5l1.500-1.500M788 264.5l1.500-1.500M790.5 268l1.500-1.500M792.5 268l1.500-1.500M794.5 268l1.500-1.500M796.5 268l1.500-1.500" stroke="#e8ebef" stroke-width="0.600"/>
<text x="801.5" y="263.8" font-size="5.9" fill="#eef1f4" stroke="#eef1f4" stroke-width="0.14" text-anchor="start" font-weight="normal" textLength="38" lengthAdjust="spacingAndGlyphs" >Step symbol -</text>
<text x="801.5" y="272.5" font-size="5.9" fill="#eef1f4" stroke="#eef1f4" stroke-width="0.14" text-anchor="start" font-weight="normal" textLength="24" lengthAdjust="spacingAndGlyphs" >Imperial</text>
<path d="M791 281.5h-4.500v13h4.500" stroke="#e8ebef" stroke-width="1.100" fill="none"/><path d="M788.3 282.5v11" stroke="#e8ebef" stroke-width="0.600"/>
<path d="M796.5 288.5l-4 4.300h2.500l-2 3.700 5.500-5h-2.800l2.300-3z" fill="#f8c432" stroke="#fff0c0" stroke-width="0.300"/>
<text x="801.5" y="286.3" font-size="5.9" fill="#eef1f4" stroke="#eef1f4" stroke-width="0.14" text-anchor="start" font-weight="normal" textLength="27.5" lengthAdjust="spacingAndGlyphs" >Channel -</text>
<text x="801.5" y="295.0" font-size="5.9" fill="#eef1f4" stroke="#eef1f4" stroke-width="0.14" text-anchor="start" font-weight="normal" textLength="24" lengthAdjust="spacingAndGlyphs" >Imperial</text>
<path d="M782 321.6h15.500M782 335.6h11" stroke="#e8ebef" stroke-width="1.100" fill="none"/><path d="M788.7 322.1v13M791 322.1v13" stroke="#e8ebef" stroke-width="0.700"/>
<path d="M796.5 329.6l-4 4.300h2.500l-2 3.700 5.500-5h-2.800l2.300-3z" fill="#f8c432" stroke="#fff0c0" stroke-width="0.300"/>
<text x="801.5" y="327.40000000000003" font-size="5.9" fill="#eef1f4" stroke="#eef1f4" stroke-width="0.14" text-anchor="start" font-weight="normal" textLength="28" lengthAdjust="spacingAndGlyphs" >WF Beam -</text>
<text x="801.5" y="336.1" font-size="5.9" fill="#eef1f4" stroke="#eef1f4" stroke-width="0.14" text-anchor="start" font-weight="normal" textLength="18.5" lengthAdjust="spacingAndGlyphs" >Metric</text>
<path d="M785 344.2h9M785 358.2h7" stroke="#e8ebef" stroke-width="1.100" fill="none"/><path d="M788.3 344.7v13M790.7 344.7v13" stroke="#e8ebef" stroke-width="0.700"/>
<path d="M796.5 352.2l-4 4.300h2.500l-2 3.700 5.500-5h-2.800l2.300-3z" fill="#f8c432" stroke="#fff0c0" stroke-width="0.300"/>
<text x="801.5" y="350.0" font-size="5.9" fill="#eef1f4" stroke="#eef1f4" stroke-width="0.14" text-anchor="start" font-weight="normal" textLength="22.5" lengthAdjust="spacingAndGlyphs" >I Beam -</text>
<text x="801.5" y="358.7" font-size="5.9" fill="#eef1f4" stroke="#eef1f4" stroke-width="0.14" text-anchor="start" font-weight="normal" textLength="18.5" lengthAdjust="spacingAndGlyphs" >Metric</text>
<rect x="780" y="364.3" width="64" height="20" fill="#252c37" />
<path d="M782 366.1v17l17-8.500z" fill="#e8ebef"/>
<text x="801.5" y="372.40000000000003" font-size="5.9" fill="#eef1f4" stroke="#eef1f4" stroke-width="0.14" text-anchor="start" font-weight="normal" textLength="24.5" lengthAdjust="spacingAndGlyphs" >Moment</text>
<text x="801.5" y="381.1" font-size="5.9" fill="#eef1f4" stroke="#eef1f4" stroke-width="0.14" text-anchor="start" font-weight="normal" textLength="38" lengthAdjust="spacingAndGlyphs" >Connection...</text>
<path d="M782 393.0h17.500M782 401.4h17.500" stroke="#c4cad3" stroke-width="0.800"/>
<text x="801.5" y="399.4" font-size="5.9" fill="#eef1f4" stroke="#eef1f4" stroke-width="0.14" text-anchor="start" font-weight="normal" textLength="41" lengthAdjust="spacingAndGlyphs" >Splice - Metric</text>
<circle cx="790" cy="419.6" r="5.300" fill="none" stroke="#e8ebef" stroke-width="1"/><path d="M790 419.6v-5.300a5.300 5.300 0 0 0 -5.300 5.300zM790 419.6v5.300a5.300 5.300 0 0 0 5.300-5.300z" fill="#e8ebef"/><path d="M790 412.1v15M782.5 419.6h15" stroke="#e8ebef" stroke-width="0.700"/>
<text x="801.5" y="417.40000000000003" font-size="5.9" fill="#eef1f4" stroke="#eef1f4" stroke-width="0.14" text-anchor="start" font-weight="normal" textLength="26" lengthAdjust="spacingAndGlyphs" >Elevation</text>
<text x="801.5" y="426.1" font-size="5.9" fill="#eef1f4" stroke="#eef1f4" stroke-width="0.14" text-anchor="start" font-weight="normal" textLength="41.5" lengthAdjust="spacingAndGlyphs" >symbol - Me...</text>
</g>
</svg>
</body></html>
